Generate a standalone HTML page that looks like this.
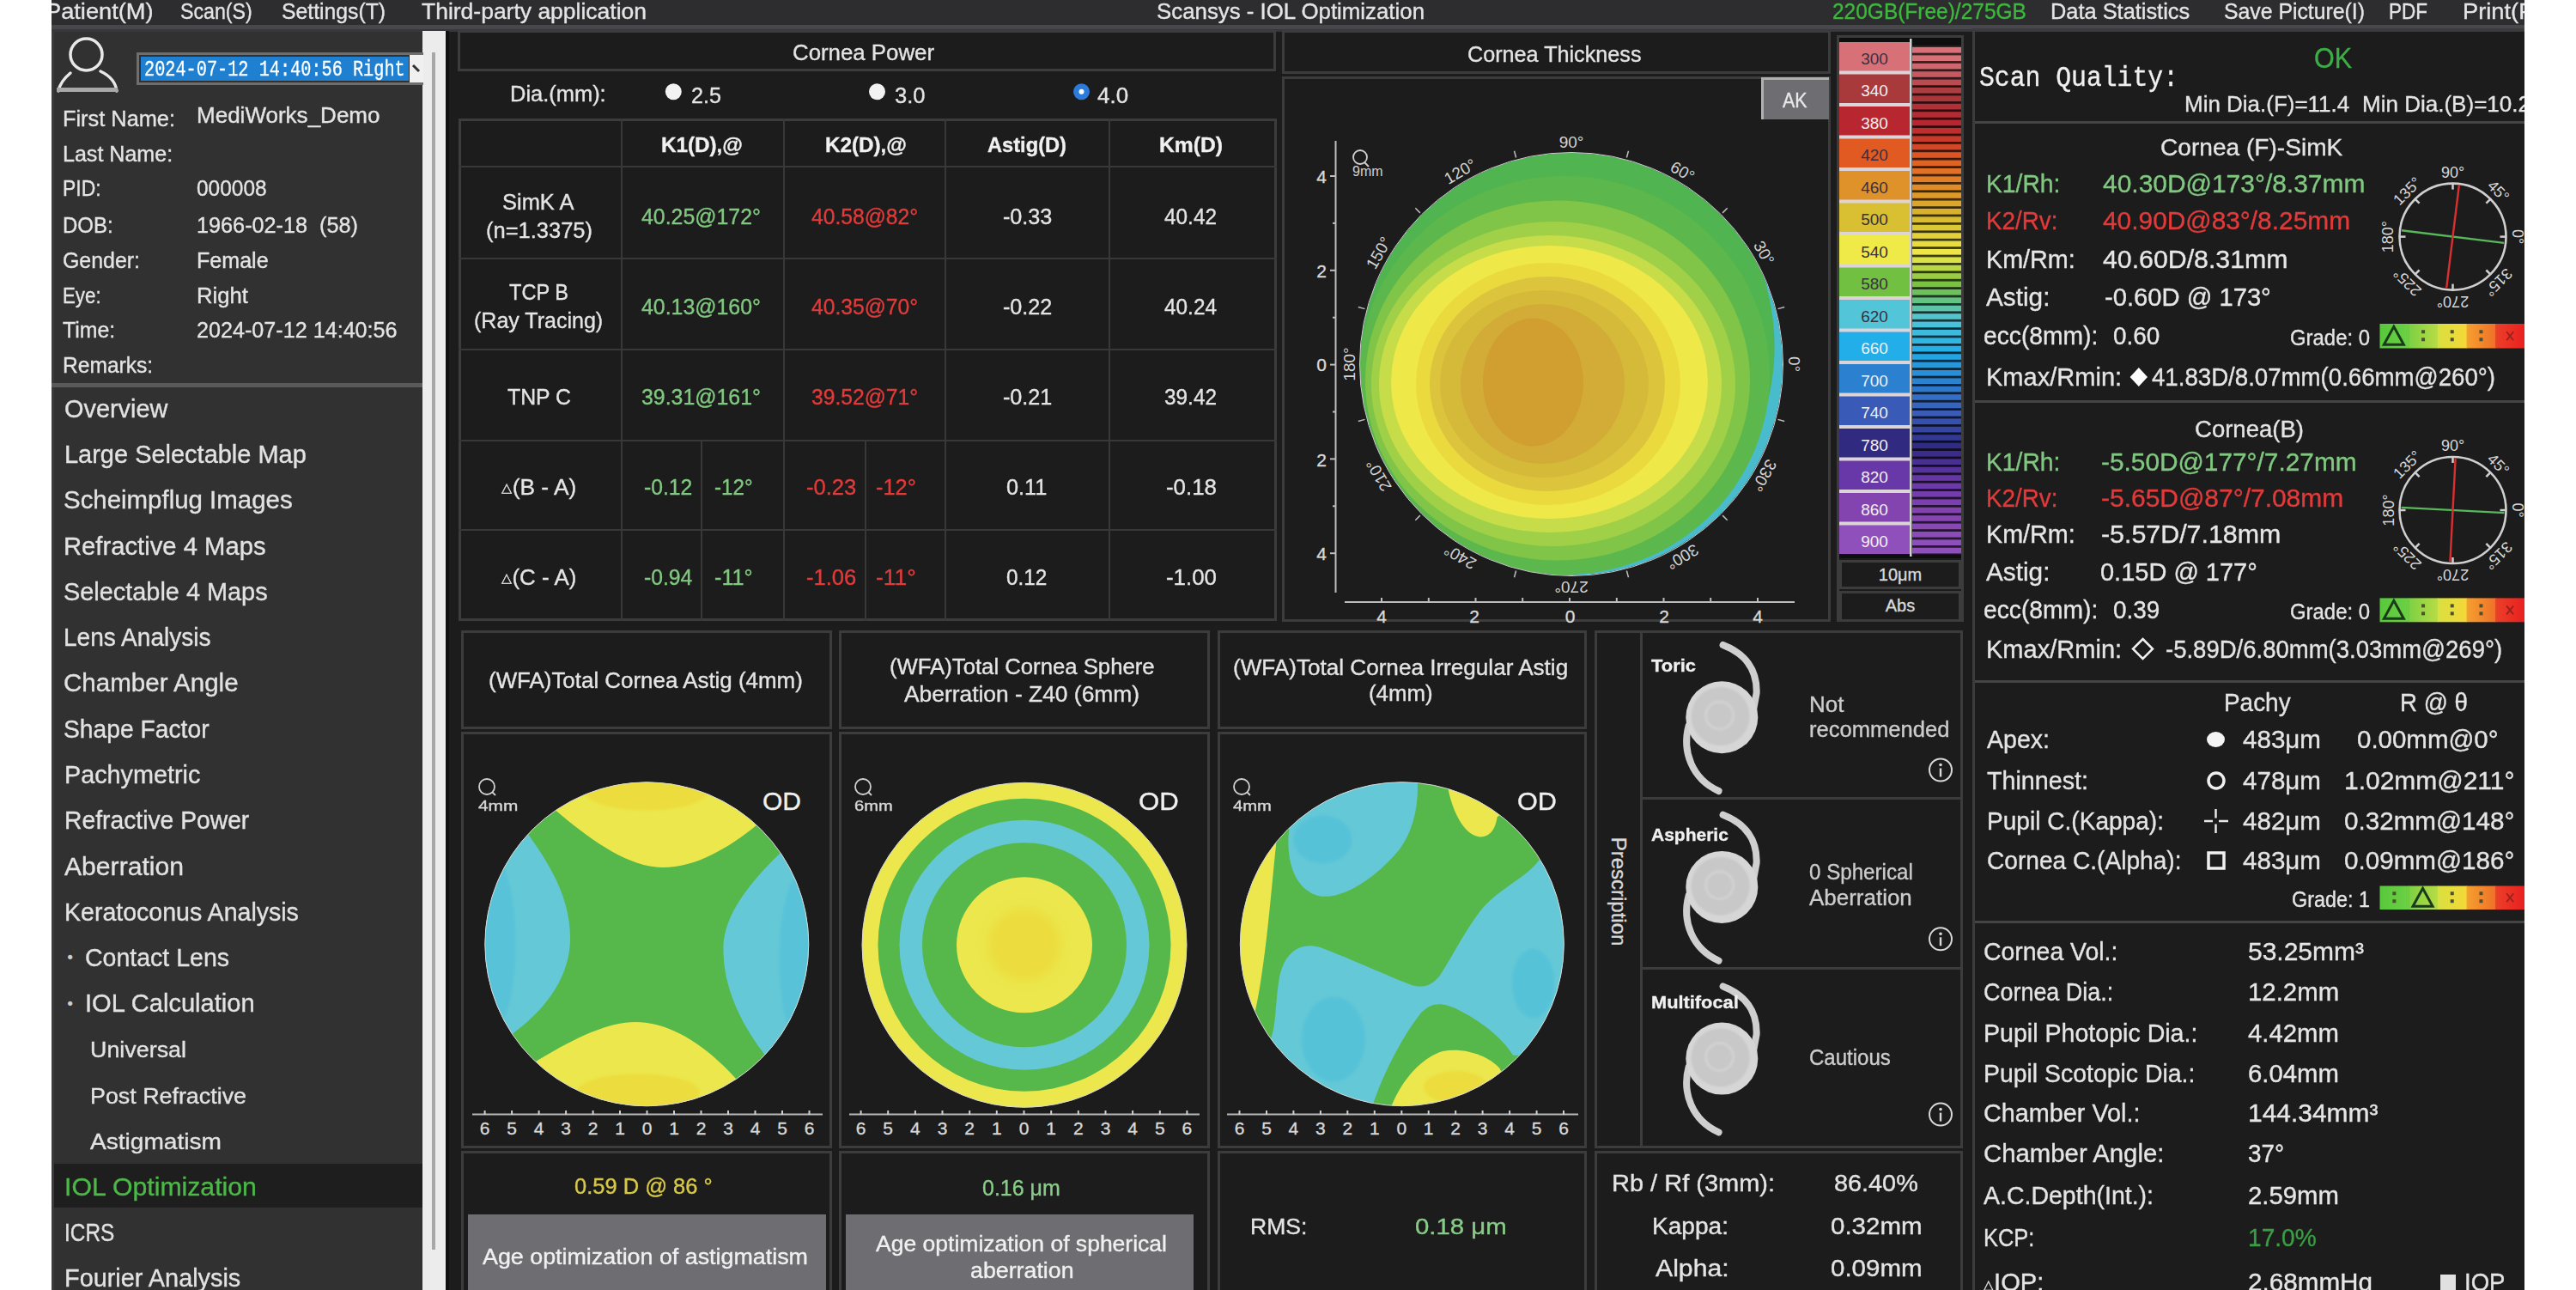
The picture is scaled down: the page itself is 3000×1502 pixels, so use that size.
<!DOCTYPE html>
<html><head><meta charset="utf-8"><style>
html,body{margin:0;padding:0;background:#fff;width:3000px;height:1502px;overflow:hidden;position:relative}
.a{position:absolute;box-sizing:border-box}
.t{position:absolute;white-space:nowrap;line-height:1;font-family:"Liberation Sans",sans-serif;-webkit-text-stroke:0.35px currentColor}
</style></head><body>
<div class="a" style="left:60px;top:0px;width:2880px;height:1502px;background:#1c1c1c;"></div>
<div class="a" style="left:60px;top:0px;width:2880px;height:29px;background:#2d2d30;"></div>
<div class="a" style="left:60px;top:29px;width:2880px;height:5px;background:#48484c;"></div>
<div class="a" style="left:60px;top:34px;width:2880px;height:3px;background:#38383a;"></div>
<div class="a" style="left:60px;top:37px;width:432px;height:1465px;background:#313131;"></div>
<div class="a" style="left:60px;top:37px;width:3px;height:1465px;background:#3a3a3a;"></div>
<div class="a" style="left:492px;top:36px;width:27px;height:1466px;background:#ececec;"></div>
<div class="a" style="left:503px;top:61px;width:4px;height:1394px;background:#a8a8a8;"></div>
<div class="a" style="left:519px;top:36px;width:4px;height:1466px;background:#101010;"></div>
<div class="a" style="left:60px;top:446px;width:432px;height:5px;background:#5a5a5a;"></div>
<div class="a" style="left:63px;top:1355px;width:429px;height:51px;background:#1e1e1e;"></div>
<svg class="a" style="left:60px;top:37px" width="100" height="80" viewBox="0 0 100 80">
<circle cx="40.5" cy="26.5" r="18.5" fill="none" stroke="#e8e8e8" stroke-width="3.5"/>
<path d="M22 48 Q 10 58 8 69" fill="none" stroke="#e8e8e8" stroke-width="3.5" stroke-linecap="round"/>
<path d="M57 46 Q 74 54 76 69" fill="none" stroke="#e8e8e8" stroke-width="3.5" stroke-linecap="round"/>
<rect x="6" y="65" width="71" height="5" fill="#a8a8a8"/>
</svg>
<div class="a" style="left:159px;top:61px;width:334px;height:38px;background:#6e6e6e;"></div>
<div class="a" style="left:162px;top:64px;width:316px;height:32px;background:#313131;"></div>
<div class="a" style="left:164px;top:66px;width:312px;height:28px;background:#1f7fd0;"></div>
<div class="a" style="left:477px;top:64px;width:16px;height:32px;background:#f0f0f0;"></div>
<div class="a" style="left:533px;top:35px;width:953px;height:48px;box-shadow:inset 0 0 0 3px #3c3c3c;"></div>
<div class="a" style="left:534px;top:138px;width:953px;height:585px;box-shadow:inset 0 0 0 3px #3c3c3c;"></div>
<div class="a" style="left:723px;top:138px;width:2px;height:585px;background:#383838;"></div>
<div class="a" style="left:912px;top:138px;width:2px;height:585px;background:#383838;"></div>
<div class="a" style="left:1100px;top:138px;width:2px;height:585px;background:#383838;"></div>
<div class="a" style="left:1291px;top:138px;width:2px;height:585px;background:#383838;"></div>
<div class="a" style="left:534px;top:193px;width:953px;height:2px;background:#383838;"></div>
<div class="a" style="left:534px;top:300px;width:953px;height:2px;background:#383838;"></div>
<div class="a" style="left:534px;top:406px;width:953px;height:2px;background:#383838;"></div>
<div class="a" style="left:534px;top:512px;width:953px;height:2px;background:#383838;"></div>
<div class="a" style="left:534px;top:616px;width:953px;height:2px;background:#383838;"></div>
<div class="a" style="left:816px;top:513px;width:2px;height:210px;background:#383838;"></div>
<div class="a" style="left:1007px;top:513px;width:2px;height:210px;background:#383838;"></div>
<div class="a" style="left:1493px;top:35px;width:639px;height:51px;box-shadow:inset 0 0 0 3px #3c3c3c;"></div>
<div class="a" style="left:1493px;top:89px;width:639px;height:635px;box-shadow:inset 0 0 0 3px #3c3c3c;"></div>
<div class="a" style="left:2051px;top:90px;width:79px;height:49px;background:#6e6e72;box-shadow:inset 3px 3px 0 #b0b0b0;"></div>
<div class="a" style="left:2139px;top:41px;width:148px;height:683px;box-shadow:inset 0 0 0 3px #3c3c3c;"></div>
<div class="a" style="left:2142px;top:44px;width:142px;height:606px;background:#0e0e0e;"></div>
<div class="a" style="left:2142px;top:652px;width:142px;height:34px;box-shadow:inset 0 0 0 3px #3c3c3c;"></div>
<div class="a" style="left:2142px;top:688px;width:142px;height:36px;box-shadow:inset 0 0 0 3px #3c3c3c;"></div>
<div class="a" style="left:2297px;top:33px;width:643px;height:3px;background:#3c3c3c;"></div>
<div class="a" style="left:2297px;top:33px;width:3px;height:1469px;background:#3c3c3c;"></div>
<div class="a" style="left:2300px;top:141px;width:640px;height:3px;background:#444444;"></div>
<div class="a" style="left:2300px;top:466px;width:640px;height:3px;background:#444444;"></div>
<div class="a" style="left:2300px;top:792px;width:640px;height:3px;background:#444444;"></div>
<div class="a" style="left:2300px;top:1072px;width:640px;height:3px;background:#444444;"></div>
<div class="a" style="left:537px;top:734px;width:432px;height:115px;box-shadow:inset 0 0 0 3px #3c3c3c;"></div>
<div class="a" style="left:537px;top:852px;width:432px;height:485px;box-shadow:inset 0 0 0 3px #3c3c3c;"></div>
<div class="a" style="left:537px;top:1340px;width:432px;height:170px;box-shadow:inset 0 0 0 3px #3c3c3c;"></div>
<div class="a" style="left:977px;top:734px;width:432px;height:115px;box-shadow:inset 0 0 0 3px #3c3c3c;"></div>
<div class="a" style="left:977px;top:852px;width:432px;height:485px;box-shadow:inset 0 0 0 3px #3c3c3c;"></div>
<div class="a" style="left:977px;top:1340px;width:432px;height:170px;box-shadow:inset 0 0 0 3px #3c3c3c;"></div>
<div class="a" style="left:1418px;top:734px;width:430px;height:115px;box-shadow:inset 0 0 0 3px #3c3c3c;"></div>
<div class="a" style="left:1418px;top:852px;width:430px;height:485px;box-shadow:inset 0 0 0 3px #3c3c3c;"></div>
<div class="a" style="left:1418px;top:1340px;width:430px;height:170px;box-shadow:inset 0 0 0 3px #3c3c3c;"></div>
<div class="a" style="left:1857px;top:734px;width:429px;height:603px;box-shadow:inset 0 0 0 3px #3c3c3c;"></div>
<div class="a" style="left:1910px;top:734px;width:3px;height:603px;background:#3c3c3c;"></div>
<div class="a" style="left:1912px;top:928px;width:374px;height:3px;background:#3c3c3c;"></div>
<div class="a" style="left:1912px;top:1126px;width:374px;height:3px;background:#3c3c3c;"></div>
<div class="a" style="left:1857px;top:1340px;width:429px;height:170px;box-shadow:inset 0 0 0 3px #3c3c3c;"></div>
<div class="a" style="left:545px;top:1414px;width:417px;height:88px;background:#6e6e72;"></div>
<div class="a" style="left:985px;top:1414px;width:405px;height:88px;background:#6e6e72;"></div>
<svg class="a" style="left:0;top:0" width="3000" height="1502" viewBox="0 0 3000 1502"><defs>
<clipPath id="c1"><circle cx="753.3" cy="1099.3" r="188.5"/></clipPath>
<clipPath id="c3"><circle cx="1632.8" cy="1099.2" r="188.5"/></clipPath>
<clipPath id="cth"><circle cx="1830" cy="424" r="246"/></clipPath>
<filter id="bl" x="-20%" y="-20%" width="140%" height="140%"><feGaussianBlur stdDeviation="1.2"/></filter>
<filter id="bl3" x="-20%" y="-20%" width="140%" height="140%"><feGaussianBlur stdDeviation="6"/></filter>
</defs>
<circle cx="784.3" cy="106.8" r="9.5" fill="#f2f2f2"/>
<circle cx="1021.5" cy="106.8" r="9.5" fill="#f2f2f2"/>
<circle cx="1259.5" cy="106.8" r="9.5" fill="#2b7bdc"/><circle cx="1259.5" cy="106.8" r="3" fill="#fff"/>
<path d="M481 76 L488 83" stroke="#333" stroke-width="3"/>
<g clip-path="url(#cth)">
<circle cx="1830" cy="424" r="246" fill="#48bccc"/>
<polygon points="2065.8,424.0 2065.4,428.1 2065.0,432.2 2064.5,436.3 2064.0,440.4 2063.4,444.4 2062.7,448.5 2062.0,452.5 2061.2,456.5 2060.4,460.5 2059.5,464.5 2058.5,468.4 2057.5,472.3 2056.4,476.3 2055.2,480.2 2054.0,484.0 2052.8,487.9 2051.4,491.7 2050.1,495.5 2048.6,499.3 2047.2,503.0 2045.6,506.8 2044.0,510.5 2042.4,514.1 2040.7,517.8 2038.9,521.4 2037.1,525.0 2035.2,528.6 2033.3,532.1 2031.3,535.6 2029.3,539.1 2027.2,542.5 2025.1,545.9 2022.9,549.3 2020.7,552.6 2018.4,555.9 2016.1,559.2 2013.7,562.4 2011.3,565.6 2008.8,568.8 2006.3,571.9 2003.7,575.0 2001.1,578.1 1998.4,581.1 1995.7,584.0 1993.0,587.0 1990.2,589.9 1987.3,592.7 1984.4,595.5 1981.5,598.3 1978.5,601.0 1975.5,603.7 1972.5,606.3 1969.4,608.9 1966.2,611.5 1963.0,614.0 1959.8,616.4 1956.5,618.8 1953.2,621.2 1949.9,623.5 1946.5,625.8 1943.1,628.0 1939.6,630.2 1936.1,632.3 1932.6,634.3 1929.0,636.3 1925.4,638.3 1921.8,640.2 1918.1,642.0 1914.4,643.8 1910.6,645.6 1906.9,647.2 1903.1,648.9 1899.2,650.4 1895.4,651.9 1891.5,653.4 1887.5,654.8 1883.6,656.1 1879.6,657.4 1875.6,658.6 1871.6,659.7 1867.5,660.8 1863.4,661.8 1859.3,662.8 1855.2,663.7 1851.0,664.5 1846.9,665.3 1842.7,666.0 1838.5,666.6 1834.2,667.2 1830.0,667.6 1825.7,668.1 1821.5,668.4 1817.2,668.7 1812.9,668.9 1808.6,669.1 1804.3,668.7 1800.0,668.2 1795.8,667.6 1791.5,667.0 1787.3,666.3 1783.1,665.5 1778.9,664.6 1774.7,663.7 1770.5,662.7 1766.3,661.6 1762.2,660.5 1758.1,659.3 1754.0,658.0 1749.9,656.6 1745.9,655.2 1741.8,653.7 1737.8,652.1 1733.9,650.4 1729.9,648.7 1726.0,647.0 1722.2,645.1 1718.3,643.2 1714.5,641.2 1710.7,639.2 1707.0,637.0 1703.3,634.9 1699.6,632.6 1696.0,630.3 1692.4,627.9 1688.9,625.5 1685.4,623.0 1682.0,620.5 1678.5,617.9 1675.2,615.2 1671.9,612.4 1668.6,609.7 1665.4,606.8 1662.2,603.9 1659.1,601.0 1656.1,597.9 1653.0,594.9 1650.1,591.8 1647.2,588.6 1644.3,585.4 1641.6,582.1 1638.8,578.8 1636.1,575.5 1633.5,572.0 1631.0,568.6 1628.5,565.1 1626.1,561.6 1623.7,558.0 1621.4,554.4 1619.1,550.7 1617.0,547.0 1614.8,543.3 1612.8,539.5 1610.8,535.7 1608.9,531.8 1607.0,528.0 1605.3,524.1 1603.6,520.1 1601.9,516.2 1600.3,512.2 1598.8,508.1 1597.4,504.1 1596.0,500.0 1594.7,495.9 1593.5,491.8 1592.4,487.7 1591.3,483.5 1590.3,479.3 1589.4,475.1 1588.5,470.9 1587.7,466.7 1587.0,462.5 1586.4,458.2 1585.8,454.0 1585.3,449.7 1584.9,445.4 1584.6,441.2 1584.3,436.9 1584.1,432.6 1584.0,428.3 1584.0,424.0 1584.0,419.7 1584.1,415.4 1584.3,411.1 1584.6,406.8 1584.9,402.6 1585.3,398.3 1585.8,394.0 1586.4,389.8 1587.0,385.5 1587.7,381.3 1588.5,377.1 1589.4,372.9 1590.3,368.7 1591.3,364.5 1592.4,360.3 1593.5,356.2 1594.7,352.1 1596.0,348.0 1597.4,343.9 1598.8,339.9 1600.3,335.8 1601.9,331.8 1603.6,327.9 1605.3,323.9 1607.0,320.0 1608.9,316.2 1610.8,312.3 1612.8,308.5 1614.8,304.7 1617.0,301.0 1619.1,297.3 1621.4,293.6 1623.7,290.0 1626.1,286.4 1628.5,282.9 1631.0,279.4 1633.5,276.0 1636.1,272.5 1638.8,269.2 1641.6,265.9 1644.3,262.6 1647.2,259.4 1650.1,256.2 1653.0,253.1 1656.1,250.1 1659.1,247.0 1662.2,244.1 1665.4,241.2 1668.6,238.3 1671.9,235.6 1675.2,232.8 1678.5,230.1 1682.0,227.5 1685.4,225.0 1688.9,222.5 1692.4,220.1 1696.0,217.7 1699.6,215.4 1703.3,213.1 1707.0,211.0 1710.7,208.8 1714.5,206.8 1718.3,204.8 1722.2,202.9 1726.0,201.0 1729.9,199.3 1733.9,197.6 1737.8,195.9 1741.8,194.3 1745.9,192.8 1749.9,191.4 1754.0,190.0 1758.1,188.7 1762.2,187.5 1766.3,186.4 1770.5,185.3 1774.7,184.3 1778.9,183.4 1783.1,182.5 1787.3,181.7 1791.5,181.0 1795.8,180.4 1800.0,179.8 1804.3,179.3 1808.6,178.9 1812.8,178.6 1817.1,178.3 1821.4,178.1 1825.7,178.0 1830.0,178.0 1834.3,178.0 1838.6,178.1 1842.9,178.3 1847.2,178.6 1851.4,178.9 1855.7,179.3 1860.0,179.8 1864.2,180.4 1868.5,181.0 1872.7,181.7 1876.9,182.5 1881.1,183.4 1885.3,184.3 1889.5,185.3 1893.7,186.4 1897.8,187.5 1901.9,188.7 1906.0,190.0 1910.1,191.4 1914.1,192.8 1918.2,194.3 1922.2,195.9 1926.1,197.6 1930.1,199.3 1934.0,201.0 1937.8,202.9 1941.7,204.8 1945.5,206.8 1949.3,208.8 1953.0,211.0 1956.7,213.1 1960.4,215.4 1964.0,217.7 1967.6,220.1 1971.1,222.5 1974.6,225.0 1978.0,227.5 1981.5,230.1 1984.8,232.8 1988.1,235.6 1991.4,238.3 1994.6,241.2 1997.8,244.1 2000.9,247.0 2003.9,250.1 2007.0,253.1 2009.9,256.2 2012.8,259.4 2015.7,262.6 2018.4,265.9 2021.2,269.2 2023.9,272.5 2026.5,276.0 2029.0,279.4 2031.5,282.9 2033.9,286.4 2036.3,290.0 2038.6,293.6 2040.9,297.3 2043.0,301.0 2045.2,304.7 2047.2,308.5 2049.2,312.3 2051.1,316.2 2053.0,320.0 2054.3,324.1 2055.6,328.3 2056.8,332.4 2057.9,336.5 2059.0,340.7 2059.9,344.8 2060.9,349.0 2061.7,353.2 2062.5,357.3 2063.2,361.5 2063.8,365.7 2064.4,369.9 2064.9,374.1 2065.4,378.2 2065.7,382.4 2066.0,386.6 2066.3,390.8 2066.4,395.0 2066.5,399.1 2066.6,403.3 2066.6,407.5 2066.5,411.6 2066.3,415.7 2066.1,419.9" fill="#50b450"/>
<ellipse cx="1822" cy="437" rx="239" ry="232" fill="#5cb84c"/>
<ellipse cx="1814" cy="443" rx="224" ry="209.6" fill="#80c448"/>
<ellipse cx="1809" cy="447" rx="212" ry="189" fill="#a0d048"/>
<ellipse cx="1805.5" cy="447" rx="199.5" ry="173" fill="#c6dc48"/>
<ellipse cx="1804.5" cy="445" rx="184.5" ry="159" fill="#eee948"/>
<ellipse cx="1803" cy="447" rx="154" ry="141" fill="#ebda3e"/>
<ellipse cx="1802" cy="447" rx="137" ry="125" fill="#dcc43c"/>
<ellipse cx="1798.5" cy="447" rx="121.5" ry="109" fill="#d5ba3a"/>
<ellipse cx="1796.5" cy="447" rx="95.5" ry="93" fill="#d2ac36"/>
<ellipse cx="1785.5" cy="445" rx="58.5" ry="74.5" fill="#d19e30"/>
</g>
<circle cx="1830" cy="424" r="246.5" fill="none" stroke="#cfcfcf" stroke-width="1"/>
<line x1="2070.5" y1="359.6" x2="2078.2" y2="357.5" stroke="#bdbdbd" stroke-width="1.5"/>
<line x1="2006.1" y1="247.9" x2="2011.7" y2="242.3" stroke="#bdbdbd" stroke-width="1.5"/>
<line x1="1894.4" y1="183.5" x2="1896.5" y2="175.8" stroke="#bdbdbd" stroke-width="1.5"/>
<line x1="1765.6" y1="183.5" x2="1763.5" y2="175.8" stroke="#bdbdbd" stroke-width="1.5"/>
<line x1="1653.9" y1="247.9" x2="1648.3" y2="242.3" stroke="#bdbdbd" stroke-width="1.5"/>
<line x1="1589.5" y1="359.6" x2="1581.8" y2="357.5" stroke="#bdbdbd" stroke-width="1.5"/>
<line x1="1589.5" y1="488.4" x2="1581.8" y2="490.5" stroke="#bdbdbd" stroke-width="1.5"/>
<line x1="1653.9" y1="600.1" x2="1648.3" y2="605.7" stroke="#bdbdbd" stroke-width="1.5"/>
<line x1="1765.6" y1="664.5" x2="1763.5" y2="672.2" stroke="#bdbdbd" stroke-width="1.5"/>
<line x1="1894.4" y1="664.5" x2="1896.5" y2="672.2" stroke="#bdbdbd" stroke-width="1.5"/>
<line x1="2006.1" y1="600.1" x2="2011.7" y2="605.7" stroke="#bdbdbd" stroke-width="1.5"/>
<line x1="2070.5" y1="488.4" x2="2078.2" y2="490.5" stroke="#bdbdbd" stroke-width="1.5"/>
<text x="2089.0" y="424.0" transform="rotate(90 2089.0 424.0)" font-family="Liberation Sans" font-size="19" fill="#d4d4d4" text-anchor="middle" dominant-baseline="central">0°</text>
<text x="2054.3" y="294.5" transform="rotate(60 2054.3 294.5)" font-family="Liberation Sans" font-size="19" fill="#d4d4d4" text-anchor="middle" dominant-baseline="central">30°</text>
<text x="1959.5" y="199.7" transform="rotate(30 1959.5 199.7)" font-family="Liberation Sans" font-size="19" fill="#d4d4d4" text-anchor="middle" dominant-baseline="central">60°</text>
<text x="1830.0" y="165.0" transform="rotate(0 1830.0 165.0)" font-family="Liberation Sans" font-size="19" fill="#d4d4d4" text-anchor="middle" dominant-baseline="central">90°</text>
<text x="1700.5" y="199.7" transform="rotate(-30 1700.5 199.7)" font-family="Liberation Sans" font-size="19" fill="#d4d4d4" text-anchor="middle" dominant-baseline="central">120°</text>
<text x="1605.7" y="294.5" transform="rotate(-60 1605.7 294.5)" font-family="Liberation Sans" font-size="19" fill="#d4d4d4" text-anchor="middle" dominant-baseline="central">150°</text>
<text x="1571.0" y="424.0" transform="rotate(-90 1571.0 424.0)" font-family="Liberation Sans" font-size="19" fill="#d4d4d4" text-anchor="middle" dominant-baseline="central">180°</text>
<text x="1605.7" y="553.5" transform="rotate(-120 1605.7 553.5)" font-family="Liberation Sans" font-size="19" fill="#d4d4d4" text-anchor="middle" dominant-baseline="central">210°</text>
<text x="1700.5" y="648.3" transform="rotate(-150 1700.5 648.3)" font-family="Liberation Sans" font-size="19" fill="#d4d4d4" text-anchor="middle" dominant-baseline="central">240°</text>
<text x="1830.0" y="683.0" transform="rotate(-180 1830.0 683.0)" font-family="Liberation Sans" font-size="19" fill="#d4d4d4" text-anchor="middle" dominant-baseline="central">270°</text>
<text x="1959.5" y="648.3" transform="rotate(-210 1959.5 648.3)" font-family="Liberation Sans" font-size="19" fill="#d4d4d4" text-anchor="middle" dominant-baseline="central">300°</text>
<text x="2054.3" y="553.5" transform="rotate(-240 2054.3 553.5)" font-family="Liberation Sans" font-size="19" fill="#d4d4d4" text-anchor="middle" dominant-baseline="central">330°</text>
<line x1="1555.5" y1="164" x2="1555.5" y2="690" stroke="#bdbdbd" stroke-width="2"/>
<line x1="1549" y1="205.0" x2="1556" y2="205.0" stroke="#bdbdbd" stroke-width="2"/>
<line x1="1552" y1="259.9" x2="1556" y2="259.9" stroke="#bdbdbd" stroke-width="2"/>
<line x1="1549" y1="314.8" x2="1556" y2="314.8" stroke="#bdbdbd" stroke-width="2"/>
<line x1="1552" y1="369.7" x2="1556" y2="369.7" stroke="#bdbdbd" stroke-width="2"/>
<line x1="1549" y1="424.6" x2="1556" y2="424.6" stroke="#bdbdbd" stroke-width="2"/>
<line x1="1552" y1="479.5" x2="1556" y2="479.5" stroke="#bdbdbd" stroke-width="2"/>
<line x1="1549" y1="534.4" x2="1556" y2="534.4" stroke="#bdbdbd" stroke-width="2"/>
<line x1="1552" y1="589.3" x2="1556" y2="589.3" stroke="#bdbdbd" stroke-width="2"/>
<line x1="1549" y1="644.2" x2="1556" y2="644.2" stroke="#bdbdbd" stroke-width="2"/>
<line x1="1566" y1="701" x2="2090" y2="701" stroke="#bdbdbd" stroke-width="2"/>
<line x1="1609.0" y1="696" x2="1609.0" y2="701" stroke="#bdbdbd" stroke-width="2"/>
<line x1="1663.8" y1="696" x2="1663.8" y2="701" stroke="#bdbdbd" stroke-width="2"/>
<line x1="1718.5" y1="696" x2="1718.5" y2="701" stroke="#bdbdbd" stroke-width="2"/>
<line x1="1773.2" y1="696" x2="1773.2" y2="701" stroke="#bdbdbd" stroke-width="2"/>
<line x1="1828.0" y1="696" x2="1828.0" y2="701" stroke="#bdbdbd" stroke-width="2"/>
<line x1="1882.8" y1="696" x2="1882.8" y2="701" stroke="#bdbdbd" stroke-width="2"/>
<line x1="1937.5" y1="696" x2="1937.5" y2="701" stroke="#bdbdbd" stroke-width="2"/>
<line x1="1992.2" y1="696" x2="1992.2" y2="701" stroke="#bdbdbd" stroke-width="2"/>
<line x1="2047.0" y1="696" x2="2047.0" y2="701" stroke="#bdbdbd" stroke-width="2"/>
<circle cx="1584" cy="183" r="8" fill="none" stroke="#d0d0d0" stroke-width="1.8"/><line x1="1589" y1="189" x2="1594" y2="194" stroke="#d0d0d0" stroke-width="1.8"/>
<text x="1575" y="205" font-family="Liberation Sans" font-size="16" fill="#d0d0d0">9mm</text>
<rect x="2142" y="49" width="82" height="595" fill="#ddd4d8"/>
<rect x="2142" y="49.0" width="82" height="33.5" fill="#d87078"/>
<rect x="2142" y="86.5" width="82" height="33.5" fill="#a83a3c"/>
<rect x="2142" y="124.0" width="82" height="33.5" fill="#b82630"/>
<rect x="2142" y="161.5" width="82" height="33.5" fill="#e05a22"/>
<rect x="2142" y="199.0" width="82" height="33.5" fill="#e0922a"/>
<rect x="2142" y="236.5" width="82" height="33.5" fill="#d8c032"/>
<rect x="2142" y="274.0" width="82" height="33.5" fill="#f0ea48"/>
<rect x="2142" y="311.5" width="82" height="33.5" fill="#72c042"/>
<rect x="2142" y="349.0" width="82" height="33.5" fill="#52c6d8"/>
<rect x="2142" y="386.5" width="82" height="33.5" fill="#22aee8"/>
<rect x="2142" y="424.0" width="82" height="33.5" fill="#2c80d0"/>
<rect x="2142" y="461.5" width="82" height="33.5" fill="#3a5ab8"/>
<rect x="2142" y="499.0" width="82" height="33.5" fill="#302a80"/>
<rect x="2142" y="536.5" width="82" height="33.5" fill="#6838a8"/>
<rect x="2142" y="574.0" width="82" height="33.5" fill="#8444b0"/>
<rect x="2142" y="611.5" width="82" height="33.5" fill="#9050bc"/>
<rect x="2224" y="45" width="2.5" height="603" fill="#e8e8e8" opacity="0.9"/>
<rect x="2227" y="53.3" width="57" height="9.4" fill="rgb(64, 33, 36)"/>
<rect x="2227" y="55.0" width="57" height="6.6" fill="rgb(216, 112, 120)"/>
<rect x="2227" y="62.7" width="57" height="9.4" fill="rgb(64, 33, 36)"/>
<rect x="2227" y="64.4" width="57" height="6.6" fill="rgb(216, 112, 120)"/>
<rect x="2227" y="72.1" width="57" height="9.4" fill="rgb(62, 30, 33)"/>
<rect x="2227" y="73.8" width="57" height="6.6" fill="rgb(208, 103, 110)"/>
<rect x="2227" y="81.5" width="57" height="9.4" fill="rgb(58, 26, 28)"/>
<rect x="2227" y="83.2" width="57" height="6.6" fill="rgb(196, 89, 95)"/>
<rect x="2227" y="90.9" width="57" height="9.4" fill="rgb(55, 22, 24)"/>
<rect x="2227" y="92.6" width="57" height="6.6" fill="rgb(184, 76, 80)"/>
<rect x="2227" y="100.3" width="57" height="9.4" fill="rgb(51, 18, 19)"/>
<rect x="2227" y="102.0" width="57" height="6.6" fill="rgb(172, 62, 65)"/>
<rect x="2227" y="109.7" width="57" height="9.4" fill="rgb(51, 16, 17)"/>
<rect x="2227" y="111.4" width="57" height="6.6" fill="rgb(170, 54, 58)"/>
<rect x="2227" y="119.1" width="57" height="9.4" fill="rgb(52, 14, 16)"/>
<rect x="2227" y="120.8" width="57" height="6.6" fill="rgb(174, 49, 55)"/>
<rect x="2227" y="128.5" width="57" height="9.4" fill="rgb(53, 13, 15)"/>
<rect x="2227" y="130.2" width="57" height="6.6" fill="rgb(178, 44, 52)"/>
<rect x="2227" y="137.9" width="57" height="9.4" fill="rgb(54, 11, 14)"/>
<rect x="2227" y="139.6" width="57" height="6.6" fill="rgb(182, 39, 49)"/>
<rect x="2227" y="147.3" width="57" height="9.4" fill="rgb(57, 13, 13)"/>
<rect x="2227" y="149.0" width="57" height="6.6" fill="rgb(190, 46, 45)"/>
<rect x="2227" y="156.7" width="57" height="9.4" fill="rgb(60, 17, 12)"/>
<rect x="2227" y="158.4" width="57" height="6.6" fill="rgb(200, 59, 42)"/>
<rect x="2227" y="166.1" width="57" height="9.4" fill="rgb(63, 21, 11)"/>
<rect x="2227" y="167.8" width="57" height="6.6" fill="rgb(210, 72, 38)"/>
<rect x="2227" y="175.5" width="57" height="9.4" fill="rgb(66, 25, 10)"/>
<rect x="2227" y="177.2" width="57" height="6.6" fill="rgb(220, 85, 35)"/>
<rect x="2227" y="184.9" width="57" height="9.4" fill="rgb(67, 29, 10)"/>
<rect x="2227" y="186.6" width="57" height="6.6" fill="rgb(224, 99, 35)"/>
<rect x="2227" y="194.3" width="57" height="9.4" fill="rgb(67, 33, 11)"/>
<rect x="2227" y="196.0" width="57" height="6.6" fill="rgb(224, 113, 37)"/>
<rect x="2227" y="203.7" width="57" height="9.4" fill="rgb(67, 38, 11)"/>
<rect x="2227" y="205.4" width="57" height="6.6" fill="rgb(224, 127, 39)"/>
<rect x="2227" y="213.1" width="57" height="9.4" fill="rgb(67, 42, 12)"/>
<rect x="2227" y="214.8" width="57" height="6.6" fill="rgb(224, 141, 41)"/>
<rect x="2227" y="222.5" width="57" height="9.4" fill="rgb(66, 45, 12)"/>
<rect x="2227" y="224.2" width="57" height="6.6" fill="rgb(222, 153, 43)"/>
<rect x="2227" y="231.9" width="57" height="9.4" fill="rgb(66, 49, 13)"/>
<rect x="2227" y="233.6" width="57" height="6.6" fill="rgb(220, 165, 45)"/>
<rect x="2227" y="241.3" width="57" height="9.4" fill="rgb(65, 52, 14)"/>
<rect x="2227" y="243.0" width="57" height="6.6" fill="rgb(218, 176, 47)"/>
<rect x="2227" y="250.7" width="57" height="9.4" fill="rgb(64, 56, 14)"/>
<rect x="2227" y="252.4" width="57" height="6.6" fill="rgb(216, 188, 49)"/>
<rect x="2227" y="260.1" width="57" height="9.4" fill="rgb(66, 59, 15)"/>
<rect x="2227" y="261.8" width="57" height="6.6" fill="rgb(220, 199, 53)"/>
<rect x="2227" y="269.5" width="57" height="9.4" fill="rgb(67, 62, 17)"/>
<rect x="2227" y="271.2" width="57" height="6.6" fill="rgb(226, 209, 59)"/>
<rect x="2227" y="278.9" width="57" height="9.4" fill="rgb(69, 66, 19)"/>
<rect x="2227" y="280.6" width="57" height="6.6" fill="rgb(232, 220, 64)"/>
<rect x="2227" y="288.3" width="57" height="9.4" fill="rgb(71, 69, 21)"/>
<rect x="2227" y="290.0" width="57" height="6.6" fill="rgb(238, 230, 70)"/>
<rect x="2227" y="297.7" width="57" height="9.4" fill="rgb(65, 67, 21)"/>
<rect x="2227" y="299.4" width="57" height="6.6" fill="rgb(217, 226, 70)"/>
<rect x="2227" y="307.1" width="57" height="9.4" fill="rgb(55, 64, 20)"/>
<rect x="2227" y="308.8" width="57" height="6.6" fill="rgb(186, 216, 69)"/>
<rect x="2227" y="316.5" width="57" height="9.4" fill="rgb(46, 61, 20)"/>
<rect x="2227" y="318.2" width="57" height="6.6" fill="rgb(154, 205, 67)"/>
<rect x="2227" y="325.9" width="57" height="9.4" fill="rgb(36, 58, 19)"/>
<rect x="2227" y="327.6" width="57" height="6.6" fill="rgb(122, 194, 66)"/>
<rect x="2227" y="335.3" width="57" height="9.4" fill="rgb(32, 57, 27)"/>
<rect x="2227" y="337.0" width="57" height="6.6" fill="rgb(108, 193, 92)"/>
<rect x="2227" y="344.7" width="57" height="9.4" fill="rgb(30, 58, 39)"/>
<rect x="2227" y="346.4" width="57" height="6.6" fill="rgb(100, 194, 130)"/>
<rect x="2227" y="354.1" width="57" height="9.4" fill="rgb(27, 58, 50)"/>
<rect x="2227" y="355.8" width="57" height="6.6" fill="rgb(92, 196, 168)"/>
<rect x="2227" y="363.5" width="57" height="9.4" fill="rgb(25, 59, 61)"/>
<rect x="2227" y="365.2" width="57" height="6.6" fill="rgb(84, 197, 205)"/>
<rect x="2227" y="372.9" width="57" height="9.4" fill="rgb(21, 57, 65)"/>
<rect x="2227" y="374.6" width="57" height="6.6" fill="rgb(73, 193, 218)"/>
<rect x="2227" y="382.3" width="57" height="9.4" fill="rgb(18, 56, 66)"/>
<rect x="2227" y="384.0" width="57" height="6.6" fill="rgb(61, 187, 222)"/>
<rect x="2227" y="391.7" width="57" height="9.4" fill="rgb(14, 54, 67)"/>
<rect x="2227" y="393.4" width="57" height="6.6" fill="rgb(49, 181, 226)"/>
<rect x="2227" y="401.1" width="57" height="9.4" fill="rgb(11, 52, 69)"/>
<rect x="2227" y="402.8" width="57" height="6.6" fill="rgb(37, 175, 230)"/>
<rect x="2227" y="410.5" width="57" height="9.4" fill="rgb(10, 49, 68)"/>
<rect x="2227" y="412.2" width="57" height="6.6" fill="rgb(35, 165, 227)"/>
<rect x="2227" y="419.9" width="57" height="9.4" fill="rgb(11, 45, 66)"/>
<rect x="2227" y="421.6" width="57" height="6.6" fill="rgb(38, 153, 221)"/>
<rect x="2227" y="429.3" width="57" height="9.4" fill="rgb(12, 42, 64)"/>
<rect x="2227" y="431.0" width="57" height="6.6" fill="rgb(40, 142, 215)"/>
<rect x="2227" y="438.7" width="57" height="9.4" fill="rgb(12, 39, 62)"/>
<rect x="2227" y="440.4" width="57" height="6.6" fill="rgb(43, 130, 209)"/>
<rect x="2227" y="448.1" width="57" height="9.4" fill="rgb(13, 36, 60)"/>
<rect x="2227" y="449.8" width="57" height="6.6" fill="rgb(46, 120, 203)"/>
<rect x="2227" y="457.5" width="57" height="9.4" fill="rgb(15, 33, 59)"/>
<rect x="2227" y="459.2" width="57" height="6.6" fill="rgb(50, 111, 197)"/>
<rect x="2227" y="466.9" width="57" height="9.4" fill="rgb(15, 30, 57)"/>
<rect x="2227" y="468.6" width="57" height="6.6" fill="rgb(53, 101, 191)"/>
<rect x="2227" y="476.3" width="57" height="9.4" fill="rgb(17, 27, 55)"/>
<rect x="2227" y="478.0" width="57" height="6.6" fill="rgb(57, 92, 185)"/>
<rect x="2227" y="485.7" width="57" height="9.4" fill="rgb(16, 24, 51)"/>
<rect x="2227" y="487.4" width="57" height="6.6" fill="rgb(56, 80, 173)"/>
<rect x="2227" y="495.1" width="57" height="9.4" fill="rgb(15, 20, 47)"/>
<rect x="2227" y="496.8" width="57" height="6.6" fill="rgb(53, 68, 159)"/>
<rect x="2227" y="504.5" width="57" height="9.4" fill="rgb(15, 16, 43)"/>
<rect x="2227" y="506.2" width="57" height="6.6" fill="rgb(51, 56, 145)"/>
<rect x="2227" y="513.9" width="57" height="9.4" fill="rgb(14, 13, 39)"/>
<rect x="2227" y="515.6" width="57" height="6.6" fill="rgb(48, 44, 131)"/>
<rect x="2227" y="523.3" width="57" height="9.4" fill="rgb(17, 13, 40)"/>
<rect x="2227" y="525.0" width="57" height="6.6" fill="rgb(58, 44, 135)"/>
<rect x="2227" y="532.7" width="57" height="9.4" fill="rgb(21, 14, 43)"/>
<rect x="2227" y="534.4" width="57" height="6.6" fill="rgb(72, 48, 145)"/>
<rect x="2227" y="542.1" width="57" height="9.4" fill="rgb(25, 15, 46)"/>
<rect x="2227" y="543.8" width="57" height="6.6" fill="rgb(86, 51, 155)"/>
<rect x="2227" y="551.5" width="57" height="9.4" fill="rgb(30, 16, 49)"/>
<rect x="2227" y="553.2" width="57" height="6.6" fill="rgb(100, 55, 165)"/>
<rect x="2227" y="560.9" width="57" height="9.4" fill="rgb(32, 17, 50)"/>
<rect x="2227" y="562.6" width="57" height="6.6" fill="rgb(109, 58, 169)"/>
<rect x="2227" y="570.3" width="57" height="9.4" fill="rgb(34, 18, 51)"/>
<rect x="2227" y="572.0" width="57" height="6.6" fill="rgb(116, 61, 171)"/>
<rect x="2227" y="579.7" width="57" height="9.4" fill="rgb(36, 19, 51)"/>
<rect x="2227" y="581.4" width="57" height="6.6" fill="rgb(123, 64, 173)"/>
<rect x="2227" y="589.1" width="57" height="9.4" fill="rgb(39, 20, 52)"/>
<rect x="2227" y="590.8" width="57" height="6.6" fill="rgb(130, 67, 175)"/>
<rect x="2227" y="598.5" width="57" height="9.4" fill="rgb(40, 21, 53)"/>
<rect x="2227" y="600.2" width="57" height="6.6" fill="rgb(134, 70, 178)"/>
<rect x="2227" y="607.9" width="57" height="9.4" fill="rgb(41, 21, 54)"/>
<rect x="2227" y="609.6" width="57" height="6.6" fill="rgb(137, 73, 181)"/>
<rect x="2227" y="617.3" width="57" height="9.4" fill="rgb(42, 22, 55)"/>
<rect x="2227" y="619.0" width="57" height="6.6" fill="rgb(140, 76, 184)"/>
<rect x="2227" y="626.7" width="57" height="9.4" fill="rgb(42, 23, 56)"/>
<rect x="2227" y="628.4" width="57" height="6.6" fill="rgb(143, 79, 187)"/>
<rect x="2227" y="636.1" width="57" height="9.4" fill="rgb(43, 24, 56)"/>
<rect x="2227" y="637.8" width="57" height="6.6" fill="rgb(144, 80, 188)"/>
<text x="2183" y="68.0" font-family="Liberation Sans" font-size="19" fill="#3a3040" text-anchor="middle" dominant-baseline="central">300</text>
<text x="2183" y="105.5" font-family="Liberation Sans" font-size="19" fill="#f0f0f0" text-anchor="middle" dominant-baseline="central">340</text>
<text x="2183" y="143.0" font-family="Liberation Sans" font-size="19" fill="#f0f0f0" text-anchor="middle" dominant-baseline="central">380</text>
<text x="2183" y="180.5" font-family="Liberation Sans" font-size="19" fill="#3a3040" text-anchor="middle" dominant-baseline="central">420</text>
<text x="2183" y="218.0" font-family="Liberation Sans" font-size="19" fill="#3a3040" text-anchor="middle" dominant-baseline="central">460</text>
<text x="2183" y="255.5" font-family="Liberation Sans" font-size="19" fill="#3a3040" text-anchor="middle" dominant-baseline="central">500</text>
<text x="2183" y="293.0" font-family="Liberation Sans" font-size="19" fill="#3a3040" text-anchor="middle" dominant-baseline="central">540</text>
<text x="2183" y="330.5" font-family="Liberation Sans" font-size="19" fill="#3a3040" text-anchor="middle" dominant-baseline="central">580</text>
<text x="2183" y="368.0" font-family="Liberation Sans" font-size="19" fill="#3a3040" text-anchor="middle" dominant-baseline="central">620</text>
<text x="2183" y="405.5" font-family="Liberation Sans" font-size="19" fill="#f0f0f0" text-anchor="middle" dominant-baseline="central">660</text>
<text x="2183" y="443.0" font-family="Liberation Sans" font-size="19" fill="#f0f0f0" text-anchor="middle" dominant-baseline="central">700</text>
<text x="2183" y="480.5" font-family="Liberation Sans" font-size="19" fill="#f0f0f0" text-anchor="middle" dominant-baseline="central">740</text>
<text x="2183" y="518.0" font-family="Liberation Sans" font-size="19" fill="#f0f0f0" text-anchor="middle" dominant-baseline="central">780</text>
<text x="2183" y="555.5" font-family="Liberation Sans" font-size="19" fill="#f0f0f0" text-anchor="middle" dominant-baseline="central">820</text>
<text x="2183" y="593.0" font-family="Liberation Sans" font-size="19" fill="#f0f0f0" text-anchor="middle" dominant-baseline="central">860</text>
<text x="2183" y="630.5" font-family="Liberation Sans" font-size="19" fill="#f0f0f0" text-anchor="middle" dominant-baseline="central">900</text>
<g clip-path="url(#c1)"><g transform="translate(554,900) scale(0.31008)">
<rect x="-100" y="-100" width="1500" height="1500" fill="#56b84a"/>
<path d="M 200,60 L 300,140 C 430,250 570,352 700,355 C 830,355 950,280 1050,200 L 1150,120 L 1150,-50 L 200,-50 Z" fill="#ebe74c"/>
<path d="M 150,1130 L 240,1075 C 380,990 500,935 600,935 C 720,935 850,1010 970,1140 L 1040,1220 L 1040,1350 L 150,1350 Z" fill="#ebe74c"/>
<path d="M 150,170 L 200,235 C 290,360 355,480 355,620 C 355,760 270,880 150,970 L 80,1030 L -50,1030 L -50,170 Z" fill="#64c8d6"/>
<path d="M 1200,250 L 1140,305 C 1020,420 930,540 930,660 C 930,800 990,930 1080,1050 L 1120,1110 L 1350,1110 L 1350,250 Z" fill="#64c8d6"/>
<ellipse cx="640" cy="70" rx="230" ry="70" fill="#ecdc3e" filter="url(#bl3)"/>
<ellipse cx="610" cy="1200" rx="230" ry="70" fill="#ecdc3e" filter="url(#bl3)"/>
<ellipse cx="60" cy="640" rx="90" ry="330" fill="#58c2d8" filter="url(#bl3)"/>
<ellipse cx="1230" cy="700" rx="90" ry="330" fill="#58c2d8" filter="url(#bl3)"/>
</g></g>
<circle cx="753.3" cy="1099.3" r="188.5" fill="none" stroke="#d8d8d8" stroke-width="1"/>
<circle cx="1193" cy="1100.3" r="189" fill="#ebe74c"/>
<circle cx="1193" cy="1100.3" r="170.5" fill="#56b84a"/>
<circle cx="1193" cy="1100.3" r="145.5" fill="#64c8d6"/>
<circle cx="1193" cy="1100.3" r="119" fill="#56b84a"/>
<circle cx="1193" cy="1100.3" r="79" fill="#ebe74c"/>
<circle cx="1193" cy="1100" r="42" fill="#ecdc3c" filter="url(#bl3)"/>
<circle cx="1193" cy="1100.3" r="189" fill="none" stroke="#d8d8d8" stroke-width="1"/>
<g clip-path="url(#c3)"><g transform="translate(1432,900) scale(0.31008)">
<rect x="-100" y="-100" width="1500" height="1500" fill="#56b84a"/>
<path d="M -50,200 L 175,265 C 160,400 145,600 120,760 C 110,830 100,880 90,920 L -50,960 Z" fill="#ebe74c"/>
<path d="M 225,150 L 225,200 C 210,300 230,430 330,460 C 420,485 560,385 640,285 C 690,215 712,120 705,20 L 705,-50 L 225,-50 Z" fill="#64c8d6"/>
<path d="M 815,-50 L 820,55 C 835,140 880,235 940,240 C 985,240 1000,200 1005,165 L 1150,60 L 1150,-50 Z" fill="#ebe74c"/>
<path d="M 1160,330 C 1120,390 1000,440 940,520 C 880,600 830,700 790,760 C 760,800 720,810 680,795 C 600,765 460,700 340,655 C 260,630 200,680 185,780 C 170,880 175,960 150,1010 L 100,1100 L 100,1400 L 540,1400 L 540,1240 C 570,1150 640,1000 720,900 C 760,860 800,860 860,890 C 940,930 1020,990 1065,1060 L 1300,1060 L 1300,300 Z" fill="#64c8d6"/>
<path d="M 600,1300 L 610,1245 C 650,1150 720,1070 800,1045 C 880,1030 970,1060 1015,1110 L 1100,1300 Z" fill="#ebe74c"/>
<ellipse cx="350" cy="250" rx="110" ry="90" fill="#56c2d8" filter="url(#bl3)"/>
<ellipse cx="390" cy="1000" rx="120" ry="160" fill="#56c2d8" filter="url(#bl3)"/>
<ellipse cx="1140" cy="790" rx="80" ry="130" fill="#56c2d8" filter="url(#bl3)"/>
<ellipse cx="850" cy="1180" rx="120" ry="60" fill="#ecdc3c" filter="url(#bl3)"/>
</g></g>
<circle cx="1632.8" cy="1099.2" r="188.5" fill="none" stroke="#d8d8d8" stroke-width="1"/>
<circle cx="567" cy="916" r="9" fill="none" stroke="#d0d0d0" stroke-width="1.8"/><line x1="573" y1="922" x2="577" y2="926" stroke="#d0d0d0" stroke-width="1.8"/>
<circle cx="1005" cy="916" r="9" fill="none" stroke="#d0d0d0" stroke-width="1.8"/><line x1="1011" y1="922" x2="1015" y2="926" stroke="#d0d0d0" stroke-width="1.8"/>
<circle cx="1446" cy="916" r="9" fill="none" stroke="#d0d0d0" stroke-width="1.8"/><line x1="1452" y1="922" x2="1456" y2="926" stroke="#d0d0d0" stroke-width="1.8"/>
<line x1="550" y1="1297.5" x2="958" y2="1297.5" stroke="#b8b8b8" stroke-width="2"/>
<line x1="564.6" y1="1293" x2="564.6" y2="1298" stroke="#d0d0d0" stroke-width="2"/>
<line x1="596.1" y1="1293" x2="596.1" y2="1298" stroke="#d0d0d0" stroke-width="2"/>
<line x1="627.6" y1="1293" x2="627.6" y2="1298" stroke="#d0d0d0" stroke-width="2"/>
<line x1="659.1" y1="1293" x2="659.1" y2="1298" stroke="#d0d0d0" stroke-width="2"/>
<line x1="690.6" y1="1293" x2="690.6" y2="1298" stroke="#d0d0d0" stroke-width="2"/>
<line x1="722.0" y1="1293" x2="722.0" y2="1298" stroke="#d0d0d0" stroke-width="2"/>
<line x1="753.5" y1="1293" x2="753.5" y2="1298" stroke="#d0d0d0" stroke-width="2"/>
<line x1="785.0" y1="1293" x2="785.0" y2="1298" stroke="#d0d0d0" stroke-width="2"/>
<line x1="816.5" y1="1293" x2="816.5" y2="1298" stroke="#d0d0d0" stroke-width="2"/>
<line x1="848.0" y1="1293" x2="848.0" y2="1298" stroke="#d0d0d0" stroke-width="2"/>
<line x1="879.5" y1="1293" x2="879.5" y2="1298" stroke="#d0d0d0" stroke-width="2"/>
<line x1="911.0" y1="1293" x2="911.0" y2="1298" stroke="#d0d0d0" stroke-width="2"/>
<line x1="942.5" y1="1293" x2="942.5" y2="1298" stroke="#d0d0d0" stroke-width="2"/>
<line x1="989" y1="1297.5" x2="1397" y2="1297.5" stroke="#b8b8b8" stroke-width="2"/>
<line x1="1002.6" y1="1293" x2="1002.6" y2="1298" stroke="#d0d0d0" stroke-width="2"/>
<line x1="1034.2" y1="1293" x2="1034.2" y2="1298" stroke="#d0d0d0" stroke-width="2"/>
<line x1="1065.9" y1="1293" x2="1065.9" y2="1298" stroke="#d0d0d0" stroke-width="2"/>
<line x1="1097.5" y1="1293" x2="1097.5" y2="1298" stroke="#d0d0d0" stroke-width="2"/>
<line x1="1129.2" y1="1293" x2="1129.2" y2="1298" stroke="#d0d0d0" stroke-width="2"/>
<line x1="1160.8" y1="1293" x2="1160.8" y2="1298" stroke="#d0d0d0" stroke-width="2"/>
<line x1="1192.5" y1="1293" x2="1192.5" y2="1298" stroke="#d0d0d0" stroke-width="2"/>
<line x1="1224.2" y1="1293" x2="1224.2" y2="1298" stroke="#d0d0d0" stroke-width="2"/>
<line x1="1255.8" y1="1293" x2="1255.8" y2="1298" stroke="#d0d0d0" stroke-width="2"/>
<line x1="1287.5" y1="1293" x2="1287.5" y2="1298" stroke="#d0d0d0" stroke-width="2"/>
<line x1="1319.1" y1="1293" x2="1319.1" y2="1298" stroke="#d0d0d0" stroke-width="2"/>
<line x1="1350.8" y1="1293" x2="1350.8" y2="1298" stroke="#d0d0d0" stroke-width="2"/>
<line x1="1382.4" y1="1293" x2="1382.4" y2="1298" stroke="#d0d0d0" stroke-width="2"/>
<line x1="1429" y1="1297.5" x2="1838" y2="1297.5" stroke="#b8b8b8" stroke-width="2"/>
<line x1="1443.5" y1="1293" x2="1443.5" y2="1298" stroke="#d0d0d0" stroke-width="2"/>
<line x1="1475.0" y1="1293" x2="1475.0" y2="1298" stroke="#d0d0d0" stroke-width="2"/>
<line x1="1506.4" y1="1293" x2="1506.4" y2="1298" stroke="#d0d0d0" stroke-width="2"/>
<line x1="1537.9" y1="1293" x2="1537.9" y2="1298" stroke="#d0d0d0" stroke-width="2"/>
<line x1="1569.3" y1="1293" x2="1569.3" y2="1298" stroke="#d0d0d0" stroke-width="2"/>
<line x1="1600.8" y1="1293" x2="1600.8" y2="1298" stroke="#d0d0d0" stroke-width="2"/>
<line x1="1632.3" y1="1293" x2="1632.3" y2="1298" stroke="#d0d0d0" stroke-width="2"/>
<line x1="1663.7" y1="1293" x2="1663.7" y2="1298" stroke="#d0d0d0" stroke-width="2"/>
<line x1="1695.2" y1="1293" x2="1695.2" y2="1298" stroke="#d0d0d0" stroke-width="2"/>
<line x1="1726.6" y1="1293" x2="1726.6" y2="1298" stroke="#d0d0d0" stroke-width="2"/>
<line x1="1758.1" y1="1293" x2="1758.1" y2="1298" stroke="#d0d0d0" stroke-width="2"/>
<line x1="1789.6" y1="1293" x2="1789.6" y2="1298" stroke="#d0d0d0" stroke-width="2"/>
<line x1="1821.0" y1="1293" x2="1821.0" y2="1298" stroke="#d0d0d0" stroke-width="2"/>
<path d="M 2006.6 751 C 2032.6 761 2046.6 780 2045.6 807 L 2041.6 829" fill="none" stroke="#cfcfcf" stroke-width="8" stroke-linecap="round"/>
<path d="M 1966.6 845 C 1958.6 875 1970.6 907 2001.6 921" fill="none" stroke="#cfcfcf" stroke-width="8" stroke-linecap="round"/>
<circle cx="2005.3" cy="835.2" r="42" fill="#d6d6d6"/>
<circle cx="2003.6" cy="834" r="34" fill="#c8c8c8" filter="url(#bl)"/>
<circle cx="2002.6" cy="833" r="16" fill="none" stroke="#d2d2d2" stroke-width="3" filter="url(#bl)"/>
<path d="M 2006.6 948.7 C 2032.6 958.7 2046.6 977.7 2045.6 1004.7 L 2041.6 1026.7" fill="none" stroke="#cfcfcf" stroke-width="8" stroke-linecap="round"/>
<path d="M 1966.6 1042.7 C 1958.6 1072.7 1970.6 1104.7 2001.6 1118.7" fill="none" stroke="#cfcfcf" stroke-width="8" stroke-linecap="round"/>
<circle cx="2005.3" cy="1032.9" r="42" fill="#d6d6d6"/>
<circle cx="2003.6" cy="1031.7" r="34" fill="#c8c8c8" filter="url(#bl)"/>
<circle cx="2002.6" cy="1030.7" r="16" fill="none" stroke="#d2d2d2" stroke-width="3" filter="url(#bl)"/>
<path d="M 2006.6 1148.4 C 2032.6 1158.4 2046.6 1177.4 2045.6 1204.4 L 2041.6 1226.4" fill="none" stroke="#cfcfcf" stroke-width="8" stroke-linecap="round"/>
<path d="M 1966.6 1242.4 C 1958.6 1272.4 1970.6 1304.4 2001.6 1318.4" fill="none" stroke="#cfcfcf" stroke-width="8" stroke-linecap="round"/>
<circle cx="2005.3" cy="1232.6000000000001" r="42" fill="#d6d6d6"/>
<circle cx="2003.6" cy="1231.4" r="34" fill="#c8c8c8" filter="url(#bl)"/>
<circle cx="2002.6" cy="1230.4" r="16" fill="none" stroke="#d2d2d2" stroke-width="3" filter="url(#bl)"/>
<circle cx="2260" cy="896.5" r="13" fill="none" stroke="#d8d8d8" stroke-width="2"/>
<circle cx="2260" cy="890.5" r="1.8" fill="#d8d8d8"/><rect x="2258.8" y="894.5" width="2.4" height="10" fill="#d8d8d8"/>
<circle cx="2260" cy="1093.3" r="13" fill="none" stroke="#d8d8d8" stroke-width="2"/>
<circle cx="2260" cy="1087.3" r="1.8" fill="#d8d8d8"/><rect x="2258.8" y="1091.3" width="2.4" height="10" fill="#d8d8d8"/>
<circle cx="2260" cy="1297.6" r="13" fill="none" stroke="#d8d8d8" stroke-width="2"/>
<circle cx="2260" cy="1291.6" r="1.8" fill="#d8d8d8"/><rect x="2258.8" y="1295.6" width="2.4" height="10" fill="#d8d8d8"/>
<circle cx="2856.5" cy="275.6" r="62" fill="none" stroke="#cfcfcf" stroke-width="2.6"/>
<line x1="2918.5" y1="275.6" x2="2911.5" y2="275.6" stroke="#cfcfcf" stroke-width="2.5"/>
<line x1="2900.3" y1="231.8" x2="2895.4" y2="236.7" stroke="#cfcfcf" stroke-width="2.5"/>
<line x1="2856.5" y1="213.6" x2="2856.5" y2="220.6" stroke="#cfcfcf" stroke-width="2.5"/>
<line x1="2812.7" y1="231.8" x2="2817.6" y2="236.7" stroke="#cfcfcf" stroke-width="2.5"/>
<line x1="2794.5" y1="275.6" x2="2801.5" y2="275.6" stroke="#cfcfcf" stroke-width="2.5"/>
<line x1="2812.7" y1="319.4" x2="2817.6" y2="314.5" stroke="#cfcfcf" stroke-width="2.5"/>
<line x1="2856.5" y1="337.6" x2="2856.5" y2="330.6" stroke="#cfcfcf" stroke-width="2.5"/>
<line x1="2900.3" y1="319.4" x2="2895.4" y2="314.5" stroke="#cfcfcf" stroke-width="2.5"/>
<line x1="2916.1" y1="282.9" x2="2796.9" y2="268.3" stroke="#58b85a" stroke-width="2.4"/>
<line x1="2849.2" y1="335.2" x2="2863.8" y2="216.0" stroke="#d83030" stroke-width="2.4"/>
<text x="2931.5" y="275.6" transform="rotate(90 2931.5 275.6)" font-family="Liberation Sans" font-size="18" fill="#d8d8d8" text-anchor="middle" dominant-baseline="central">0°</text>
<text x="2909.5" y="222.6" transform="rotate(45 2909.5 222.6)" font-family="Liberation Sans" font-size="18" fill="#d8d8d8" text-anchor="middle" dominant-baseline="central">45°</text>
<text x="2856.5" y="200.6" transform="rotate(0 2856.5 200.6)" font-family="Liberation Sans" font-size="18" fill="#d8d8d8" text-anchor="middle" dominant-baseline="central">90°</text>
<text x="2803.5" y="222.6" transform="rotate(-45 2803.5 222.6)" font-family="Liberation Sans" font-size="18" fill="#d8d8d8" text-anchor="middle" dominant-baseline="central">135°</text>
<text x="2781.5" y="275.6" transform="rotate(-90 2781.5 275.6)" font-family="Liberation Sans" font-size="18" fill="#d8d8d8" text-anchor="middle" dominant-baseline="central">180°</text>
<text x="2803.5" y="328.6" transform="rotate(-135 2803.5 328.6)" font-family="Liberation Sans" font-size="18" fill="#d8d8d8" text-anchor="middle" dominant-baseline="central">225°</text>
<text x="2856.5" y="350.6" transform="rotate(-180 2856.5 350.6)" font-family="Liberation Sans" font-size="18" fill="#d8d8d8" text-anchor="middle" dominant-baseline="central">270°</text>
<text x="2909.5" y="328.6" transform="rotate(-225 2909.5 328.6)" font-family="Liberation Sans" font-size="18" fill="#d8d8d8" text-anchor="middle" dominant-baseline="central">315°</text>
<circle cx="2856.5" cy="594" r="62" fill="none" stroke="#cfcfcf" stroke-width="2.6"/>
<line x1="2918.5" y1="594.0" x2="2911.5" y2="594.0" stroke="#cfcfcf" stroke-width="2.5"/>
<line x1="2900.3" y1="550.2" x2="2895.4" y2="555.1" stroke="#cfcfcf" stroke-width="2.5"/>
<line x1="2856.5" y1="532.0" x2="2856.5" y2="539.0" stroke="#cfcfcf" stroke-width="2.5"/>
<line x1="2812.7" y1="550.2" x2="2817.6" y2="555.1" stroke="#cfcfcf" stroke-width="2.5"/>
<line x1="2794.5" y1="594.0" x2="2801.5" y2="594.0" stroke="#cfcfcf" stroke-width="2.5"/>
<line x1="2812.7" y1="637.8" x2="2817.6" y2="632.9" stroke="#cfcfcf" stroke-width="2.5"/>
<line x1="2856.5" y1="656.0" x2="2856.5" y2="649.0" stroke="#cfcfcf" stroke-width="2.5"/>
<line x1="2900.3" y1="637.8" x2="2895.4" y2="632.9" stroke="#cfcfcf" stroke-width="2.5"/>
<line x1="2916.4" y1="597.1" x2="2796.6" y2="590.9" stroke="#58b85a" stroke-width="2.4"/>
<line x1="2853.4" y1="653.9" x2="2859.6" y2="534.1" stroke="#d83030" stroke-width="2.4"/>
<text x="2931.5" y="594.0" transform="rotate(90 2931.5 594.0)" font-family="Liberation Sans" font-size="18" fill="#d8d8d8" text-anchor="middle" dominant-baseline="central">0°</text>
<text x="2909.5" y="541.0" transform="rotate(45 2909.5 541.0)" font-family="Liberation Sans" font-size="18" fill="#d8d8d8" text-anchor="middle" dominant-baseline="central">45°</text>
<text x="2856.5" y="519.0" transform="rotate(0 2856.5 519.0)" font-family="Liberation Sans" font-size="18" fill="#d8d8d8" text-anchor="middle" dominant-baseline="central">90°</text>
<text x="2803.5" y="541.0" transform="rotate(-45 2803.5 541.0)" font-family="Liberation Sans" font-size="18" fill="#d8d8d8" text-anchor="middle" dominant-baseline="central">135°</text>
<text x="2781.5" y="594.0" transform="rotate(-90 2781.5 594.0)" font-family="Liberation Sans" font-size="18" fill="#d8d8d8" text-anchor="middle" dominant-baseline="central">180°</text>
<text x="2803.5" y="647.0" transform="rotate(-135 2803.5 647.0)" font-family="Liberation Sans" font-size="18" fill="#d8d8d8" text-anchor="middle" dominant-baseline="central">225°</text>
<text x="2856.5" y="669.0" transform="rotate(-180 2856.5 669.0)" font-family="Liberation Sans" font-size="18" fill="#d8d8d8" text-anchor="middle" dominant-baseline="central">270°</text>
<text x="2909.5" y="647.0" transform="rotate(-225 2909.5 647.0)" font-family="Liberation Sans" font-size="18" fill="#d8d8d8" text-anchor="middle" dominant-baseline="central">315°</text>
<defs><linearGradient id="g377_0" x1="0" x2="1"><stop offset="0" stop-color="#58c83c"/><stop offset="1" stop-color="#6cd044"/></linearGradient></defs>
<rect x="2771.5" y="377" width="34.2" height="28.5" fill="url(#g377_0)"/>
<defs><linearGradient id="g377_1" x1="0" x2="1"><stop offset="0" stop-color="#7cd044"/><stop offset="1" stop-color="#b8dc44"/></linearGradient></defs>
<rect x="2805.2" y="377" width="34.2" height="28.5" fill="url(#g377_1)"/>
<defs><linearGradient id="g377_2" x1="0" x2="1"><stop offset="0" stop-color="#d8e040"/><stop offset="1" stop-color="#f4d838"/></linearGradient></defs>
<rect x="2838.9" y="377" width="34.2" height="28.5" fill="url(#g377_2)"/>
<defs><linearGradient id="g377_3" x1="0" x2="1"><stop offset="0" stop-color="#f4a030"/><stop offset="1" stop-color="#f07028"/></linearGradient></defs>
<rect x="2872.6" y="377" width="34.2" height="28.5" fill="url(#g377_3)"/>
<defs><linearGradient id="g377_4" x1="0" x2="1"><stop offset="0" stop-color="#ec4028"/><stop offset="1" stop-color="#e82020"/></linearGradient></defs>
<rect x="2906.3" y="377" width="34.2" height="28.5" fill="url(#g377_4)"/>
<path d="M 2776.35 401.25 L 2787.85 380.25 L 2799.35 401.25 Z" fill="none" stroke="#1a3a1a" stroke-width="3"/>
<rect x="2820.05" y="384.25" width="4" height="4" fill="#505030"/><rect x="2820.05" y="393.25" width="4" height="4" fill="#505030"/>
<rect x="2853.75" y="384.25" width="4" height="4" fill="#505030"/><rect x="2853.75" y="393.25" width="4" height="4" fill="#505030"/>
<rect x="2887.45" y="384.25" width="4" height="4" fill="#505030"/><rect x="2887.45" y="393.25" width="4" height="4" fill="#505030"/>
<path d="M 2919.15 386.25 L 2927.15 396.25 M 2927.15 386.25 L 2919.15 396.25" stroke="#a02020" stroke-width="2"/>
<defs><linearGradient id="g696_0" x1="0" x2="1"><stop offset="0" stop-color="#58c83c"/><stop offset="1" stop-color="#6cd044"/></linearGradient></defs>
<rect x="2771.5" y="696.4" width="34.2" height="27.899999999999977" fill="url(#g696_0)"/>
<defs><linearGradient id="g696_1" x1="0" x2="1"><stop offset="0" stop-color="#7cd044"/><stop offset="1" stop-color="#b8dc44"/></linearGradient></defs>
<rect x="2805.2" y="696.4" width="34.2" height="27.899999999999977" fill="url(#g696_1)"/>
<defs><linearGradient id="g696_2" x1="0" x2="1"><stop offset="0" stop-color="#d8e040"/><stop offset="1" stop-color="#f4d838"/></linearGradient></defs>
<rect x="2838.9" y="696.4" width="34.2" height="27.899999999999977" fill="url(#g696_2)"/>
<defs><linearGradient id="g696_3" x1="0" x2="1"><stop offset="0" stop-color="#f4a030"/><stop offset="1" stop-color="#f07028"/></linearGradient></defs>
<rect x="2872.6" y="696.4" width="34.2" height="27.899999999999977" fill="url(#g696_3)"/>
<defs><linearGradient id="g696_4" x1="0" x2="1"><stop offset="0" stop-color="#ec4028"/><stop offset="1" stop-color="#e82020"/></linearGradient></defs>
<rect x="2906.3" y="696.4" width="34.2" height="27.899999999999977" fill="url(#g696_4)"/>
<path d="M 2776.35 720.3499999999999 L 2787.85 699.3499999999999 L 2799.35 720.3499999999999 Z" fill="none" stroke="#1a3a1a" stroke-width="3"/>
<rect x="2820.05" y="703.3499999999999" width="4" height="4" fill="#505030"/><rect x="2820.05" y="712.3499999999999" width="4" height="4" fill="#505030"/>
<rect x="2853.75" y="703.3499999999999" width="4" height="4" fill="#505030"/><rect x="2853.75" y="712.3499999999999" width="4" height="4" fill="#505030"/>
<rect x="2887.45" y="703.3499999999999" width="4" height="4" fill="#505030"/><rect x="2887.45" y="712.3499999999999" width="4" height="4" fill="#505030"/>
<path d="M 2919.15 705.3499999999999 L 2927.15 715.3499999999999 M 2927.15 705.3499999999999 L 2919.15 715.3499999999999" stroke="#a02020" stroke-width="2"/>
<defs><linearGradient id="g1031_0" x1="0" x2="1"><stop offset="0" stop-color="#58c83c"/><stop offset="1" stop-color="#6cd044"/></linearGradient></defs>
<rect x="2771.5" y="1031.5" width="34.2" height="27.5" fill="url(#g1031_0)"/>
<defs><linearGradient id="g1031_1" x1="0" x2="1"><stop offset="0" stop-color="#7cd044"/><stop offset="1" stop-color="#b8dc44"/></linearGradient></defs>
<rect x="2805.2" y="1031.5" width="34.2" height="27.5" fill="url(#g1031_1)"/>
<defs><linearGradient id="g1031_2" x1="0" x2="1"><stop offset="0" stop-color="#d8e040"/><stop offset="1" stop-color="#f4d838"/></linearGradient></defs>
<rect x="2838.9" y="1031.5" width="34.2" height="27.5" fill="url(#g1031_2)"/>
<defs><linearGradient id="g1031_3" x1="0" x2="1"><stop offset="0" stop-color="#f4a030"/><stop offset="1" stop-color="#f07028"/></linearGradient></defs>
<rect x="2872.6" y="1031.5" width="34.2" height="27.5" fill="url(#g1031_3)"/>
<defs><linearGradient id="g1031_4" x1="0" x2="1"><stop offset="0" stop-color="#ec4028"/><stop offset="1" stop-color="#e82020"/></linearGradient></defs>
<rect x="2906.3" y="1031.5" width="34.2" height="27.5" fill="url(#g1031_4)"/>
<rect x="2786.35" y="1038.25" width="4" height="4" fill="#505030"/><rect x="2786.35" y="1047.25" width="4" height="4" fill="#505030"/>
<path d="M 2810.05 1055.25 L 2821.55 1034.25 L 2833.05 1055.25 Z" fill="none" stroke="#1a3a1a" stroke-width="3"/>
<rect x="2853.75" y="1038.25" width="4" height="4" fill="#505030"/><rect x="2853.75" y="1047.25" width="4" height="4" fill="#505030"/>
<rect x="2887.45" y="1038.25" width="4" height="4" fill="#505030"/><rect x="2887.45" y="1047.25" width="4" height="4" fill="#505030"/>
<path d="M 2919.15 1040.25 L 2927.15 1050.25 M 2927.15 1040.25 L 2919.15 1050.25" stroke="#a02020" stroke-width="2"/>
<ellipse cx="2580.5" cy="861" rx="10.5" ry="9" fill="#f4f4f4"/>
<circle cx="2581" cy="909" r="9" fill="none" stroke="#f0f0f0" stroke-width="3.5"/>
<path d="M 2567 956 L 2595 956 M 2580.5 942 L 2580.5 970" stroke="#e8e8e8" stroke-width="2.5"/><rect x="2577" y="952.5" width="7" height="7" fill="#1c1c1c"/>
<rect x="2572" y="993" width="18" height="18" fill="none" stroke="#f0f0f0" stroke-width="3.5"/>
<path d="M 2490.8 428 L 2501 439 L 2490.8 450 L 2480.6 439 Z" fill="#ffffff"/>
<path d="M 2495.5 744 L 2507 755.5 L 2495.5 767 L 2484 755.5 Z" fill="none" stroke="#f0f0f0" stroke-width="2.5"/>
<rect x="2842" y="1484" width="18" height="18" fill="#e0e0e0"/></svg>
<div class="t" style="left:53px;top:1.0px;font-size:25px;color:#e4e4e4;font-family:'Liberation Sans', sans-serif;transform:scaleX(1.0892);transform-origin:left center;">Patient(M)</div>
<div class="t" style="left:210.3px;top:1.0px;font-size:25px;color:#e4e4e4;font-family:'Liberation Sans', sans-serif;transform:scaleX(0.9268);transform-origin:left center;">Scan(S)</div>
<div class="t" style="left:328px;top:1.0px;font-size:25px;color:#e4e4e4;font-family:'Liberation Sans', sans-serif;transform:scaleX(0.9896);transform-origin:left center;">Settings(T)</div>
<div class="t" style="left:491px;top:1.0px;font-size:25px;color:#e4e4e4;font-family:'Liberation Sans', sans-serif;transform:scaleX(1.0593);transform-origin:left center;">Third-party application</div>
<div class="t" style="left:1346.6px;top:1.0px;font-size:25px;color:#e4e4e4;font-family:'Liberation Sans', sans-serif;transform:scaleX(1.0333);transform-origin:left center;">Scansys - IOL Optimization</div>
<div class="t" style="left:2133.7px;top:1.0px;font-size:25px;color:#3cb83c;font-family:'Liberation Sans', sans-serif;transform:scaleX(0.9793);transform-origin:left center;">220GB(Free)/275GB</div>
<div class="t" style="left:2387.6px;top:1.0px;font-size:25px;color:#e4e4e4;font-family:'Liberation Sans', sans-serif;transform:scaleX(1.0151);transform-origin:left center;">Data Statistics</div>
<div class="t" style="left:2590px;top:1.0px;font-size:25px;color:#e4e4e4;font-family:'Liberation Sans', sans-serif;transform:scaleX(0.9919);transform-origin:left center;">Save Picture(I)</div>
<div class="t" style="left:2782px;top:1.0px;font-size:25px;color:#e4e4e4;font-family:'Liberation Sans', sans-serif;transform:scaleX(0.9000);transform-origin:left center;">PDF</div>
<div class="t" style="left:2867.6px;top:1.0px;font-size:25px;color:#e4e4e4;font-family:'Liberation Sans', sans-serif;transform:scaleX(1.0905);transform-origin:left center;">Print(P)</div>
<div class="t" style="left:168px;top:68.3px;font-size:26px;color:#ffffff;font-family:'Liberation Mono', monospace;transform:scaleX(0.7786);transform-origin:left center;">2024-07-12 14:40:56 Right</div>
<div class="t" style="left:73.4px;top:125.6px;font-size:25px;color:#e4e4e4;font-family:'Liberation Sans', sans-serif;transform:scaleX(1.0140);transform-origin:left center;">First Name:</div>
<div class="t" style="left:229px;top:121.5px;font-size:25px;color:#e4e4e4;font-family:'Liberation Sans', sans-serif;transform:scaleX(1.0407);transform-origin:left center;">MediWorks_Demo</div>
<div class="t" style="left:73.4px;top:166.7px;font-size:25px;color:#e4e4e4;font-family:'Liberation Sans', sans-serif;transform:scaleX(1.0020);transform-origin:left center;">Last Name:</div>
<div class="t" style="left:73.4px;top:207.3px;font-size:25px;color:#e4e4e4;font-family:'Liberation Sans', sans-serif;transform:scaleX(0.9172);transform-origin:left center;">PID:</div>
<div class="t" style="left:229px;top:207.3px;font-size:25px;color:#e4e4e4;font-family:'Liberation Sans', sans-serif;transform:scaleX(0.9780);transform-origin:left center;">000008</div>
<div class="t" style="left:73.4px;top:250.0px;font-size:25px;color:#e4e4e4;font-family:'Liberation Sans', sans-serif;transform:scaleX(0.9587);transform-origin:left center;">DOB:</div>
<div class="t" style="left:229px;top:250.0px;font-size:25px;color:#e4e4e4;font-family:'Liberation Sans', sans-serif;transform:scaleX(1.0095);transform-origin:left center;">1966-02-18&nbsp; (58)</div>
<div class="t" style="left:73.4px;top:290.8px;font-size:25px;color:#e4e4e4;font-family:'Liberation Sans', sans-serif;transform:scaleX(0.9962);transform-origin:left center;">Gender:</div>
<div class="t" style="left:229px;top:290.8px;font-size:25px;color:#e4e4e4;font-family:'Liberation Sans', sans-serif;transform:scaleX(1.0027);transform-origin:left center;">Female</div>
<div class="t" style="left:73.4px;top:331.6px;font-size:25px;color:#e4e4e4;font-family:'Liberation Sans', sans-serif;transform:scaleX(0.8914);transform-origin:left center;">Eye:</div>
<div class="t" style="left:229px;top:331.6px;font-size:25px;color:#e4e4e4;font-family:'Liberation Sans', sans-serif;transform:scaleX(1.0278);transform-origin:left center;">Right</div>
<div class="t" style="left:73.4px;top:372.3px;font-size:25px;color:#e4e4e4;font-family:'Liberation Sans', sans-serif;transform:scaleX(0.9939);transform-origin:left center;">Time:</div>
<div class="t" style="left:229px;top:372.3px;font-size:25px;color:#e4e4e4;font-family:'Liberation Sans', sans-serif;transform:scaleX(1.0062);transform-origin:left center;">2024-07-12 14:40:56</div>
<div class="t" style="left:73.4px;top:413.0px;font-size:25px;color:#e4e4e4;font-family:'Liberation Sans', sans-serif;transform:scaleX(0.9835);transform-origin:left center;">Remarks:</div>
<div class="t" style="left:74.6px;top:461.7px;font-size:29px;color:#e2e2e2;font-family:'Liberation Sans', sans-serif;transform:scaleX(0.9962);transform-origin:left center;">Overview</div>
<div class="t" style="left:74.6px;top:515.0px;font-size:29px;color:#e2e2e2;font-family:'Liberation Sans', sans-serif;transform:scaleX(0.9988);transform-origin:left center;">Large Selectable Map</div>
<div class="t" style="left:74.4px;top:568.3px;font-size:29px;color:#e2e2e2;font-family:'Liberation Sans', sans-serif;transform:scaleX(1.0147);transform-origin:left center;">Scheimpflug Images</div>
<div class="t" style="left:74.4px;top:621.6px;font-size:29px;color:#e2e2e2;font-family:'Liberation Sans', sans-serif;transform:scaleX(1.0081);transform-origin:left center;">Refractive 4 Maps</div>
<div class="t" style="left:74.4px;top:674.8px;font-size:29px;color:#e2e2e2;font-family:'Liberation Sans', sans-serif;transform:scaleX(0.9958);transform-origin:left center;">Selectable 4 Maps</div>
<div class="t" style="left:74.4px;top:728.1px;font-size:29px;color:#e2e2e2;font-family:'Liberation Sans', sans-serif;transform:scaleX(0.9677);transform-origin:left center;">Lens Analysis</div>
<div class="t" style="left:74.4px;top:781.4px;font-size:29px;color:#e2e2e2;font-family:'Liberation Sans', sans-serif;transform:scaleX(1.0185);transform-origin:left center;">Chamber Angle</div>
<div class="t" style="left:74.4px;top:834.7px;font-size:29px;color:#e2e2e2;font-family:'Liberation Sans', sans-serif;transform:scaleX(0.9741);transform-origin:left center;">Shape Factor</div>
<div class="t" style="left:74.7px;top:888.0px;font-size:29px;color:#e2e2e2;font-family:'Liberation Sans', sans-serif;transform:scaleX(0.9922);transform-origin:left center;">Pachymetric</div>
<div class="t" style="left:74.7px;top:941.3px;font-size:29px;color:#e2e2e2;font-family:'Liberation Sans', sans-serif;transform:scaleX(0.9750);transform-origin:left center;">Refractive Power</div>
<div class="t" style="left:74.7px;top:994.6px;font-size:29px;color:#e2e2e2;font-family:'Liberation Sans', sans-serif;transform:scaleX(1.0388);transform-origin:left center;">Aberration</div>
<div class="t" style="left:74.7px;top:1047.9px;font-size:29px;color:#e2e2e2;font-family:'Liberation Sans', sans-serif;transform:scaleX(0.9842);transform-origin:left center;">Keratoconus Analysis</div>
<div class="t" style="left:99.4px;top:1101.2px;font-size:29px;color:#e2e2e2;font-family:'Liberation Sans', sans-serif;transform:scaleX(0.9831);transform-origin:left center;">Contact Lens</div>
<div class="t" style="left:81.7px;top:1106.4px;font-size:18px;color:#cfcfcf;font-family:'Liberation Sans', sans-serif;transform:translateX(-50%);transform-origin:center center;">&#8226;</div>
<div class="t" style="left:99.4px;top:1154.4px;font-size:29px;color:#e2e2e2;font-family:'Liberation Sans', sans-serif;transform:scaleX(1.0020);transform-origin:left center;">IOL Calculation</div>
<div class="t" style="left:81.7px;top:1159.7px;font-size:18px;color:#cfcfcf;font-family:'Liberation Sans', sans-serif;transform:translateX(-50%);transform-origin:center center;">&#8226;</div>
<div class="t" style="left:105px;top:1209.2px;font-size:26px;color:#e2e2e2;font-family:'Liberation Sans', sans-serif;transform:scaleX(1.0334);transform-origin:left center;">Universal</div>
<div class="t" style="left:105px;top:1262.5px;font-size:26px;color:#e2e2e2;font-family:'Liberation Sans', sans-serif;transform:scaleX(1.0323);transform-origin:left center;">Post Refractive</div>
<div class="t" style="left:105px;top:1315.8px;font-size:26px;color:#e2e2e2;font-family:'Liberation Sans', sans-serif;transform:scaleX(1.0807);transform-origin:left center;">Astigmatism</div>
<div class="t" style="left:74.7px;top:1367.6px;font-size:29px;color:#4cb848;font-family:'Liberation Sans', sans-serif;transform:scaleX(1.0418);transform-origin:left center;">IOL Optimization</div>
<div class="t" style="left:74.7px;top:1420.9px;font-size:29px;color:#e2e2e2;font-family:'Liberation Sans', sans-serif;transform:scaleX(0.8413);transform-origin:left center;">ICRS</div>
<div class="t" style="left:74.7px;top:1474.2px;font-size:29px;color:#e2e2e2;font-family:'Liberation Sans', sans-serif;transform:scaleX(0.9951);transform-origin:left center;">Fourier Analysis</div>
<div class="t" style="left:923px;top:47.5px;font-size:26px;color:#e4e4e4;font-family:'Liberation Sans', sans-serif;transform:scaleX(0.9928);transform-origin:left center;">Cornea Power</div>
<div class="t" style="left:594px;top:97.0px;font-size:25px;color:#e4e4e4;font-family:'Liberation Sans', sans-serif;transform:scaleX(1.0181);transform-origin:left center;">Dia.(mm):</div>
<div class="t" style="left:804.7px;top:98.6px;font-size:25px;color:#e4e4e4;font-family:'Liberation Sans', sans-serif;transform:scaleX(1.0067);transform-origin:left center;">2.5</div>
<div class="t" style="left:1041.5px;top:98.6px;font-size:25px;color:#e4e4e4;font-family:'Liberation Sans', sans-serif;transform:scaleX(1.0211);transform-origin:left center;">3.0</div>
<div class="t" style="left:1278.3px;top:98.6px;font-size:25px;color:#e4e4e4;font-family:'Liberation Sans', sans-serif;transform:scaleX(1.0384);transform-origin:left center;">4.0</div>
<div class="t" style="left:770px;top:157.4px;font-size:24px;color:#f0f0f0;font-family:'Liberation Sans', sans-serif;font-weight:bold;transform:scaleX(1.0098);transform-origin:left center;">K1(D),@</div>
<div class="t" style="left:961px;top:157.4px;font-size:24px;color:#f0f0f0;font-family:'Liberation Sans', sans-serif;font-weight:bold;transform:scaleX(1.0098);transform-origin:left center;">K2(D),@</div>
<div class="t" style="left:1150px;top:157.4px;font-size:24px;color:#f0f0f0;font-family:'Liberation Sans', sans-serif;font-weight:bold;transform:scaleX(0.9858);transform-origin:left center;">Astig(D)</div>
<div class="t" style="left:1350px;top:157.4px;font-size:24px;color:#f0f0f0;font-family:'Liberation Sans', sans-serif;font-weight:bold;transform:scaleX(1.0278);transform-origin:left center;">Km(D)</div>
<div class="t" style="left:585.4px;top:223.0px;font-size:25px;color:#e4e4e4;font-family:'Liberation Sans', sans-serif;transform:scaleX(1.0185);transform-origin:left center;">SimK A</div>
<div class="t" style="left:566px;top:256.0px;font-size:25px;color:#e4e4e4;font-family:'Liberation Sans', sans-serif;transform:scaleX(1.0195);transform-origin:left center;">(n=1.3375)</div>
<div class="t" style="left:593px;top:327.7px;font-size:25px;color:#e4e4e4;font-family:'Liberation Sans', sans-serif;transform:scaleX(0.9430);transform-origin:left center;">TCP B</div>
<div class="t" style="left:552.4px;top:360.7px;font-size:25px;color:#e4e4e4;font-family:'Liberation Sans', sans-serif;transform:scaleX(1.0010);transform-origin:left center;">(Ray Tracing)</div>
<div class="t" style="left:591px;top:450.0px;font-size:25px;color:#e4e4e4;font-family:'Liberation Sans', sans-serif;transform:scaleX(0.9925);transform-origin:left center;">TNP C</div>
<div class="t" style="left:583.5px;top:555.0px;font-size:25px;color:#e4e4e4;font-family:'Liberation Sans', sans-serif;transform:scaleX(1.0538);transform-origin:left center;"><span style="font-size:15px;vertical-align:3px">&#9651;</span>(B - A)</div>
<div class="t" style="left:583.5px;top:660.0px;font-size:25px;color:#e4e4e4;font-family:'Liberation Sans', sans-serif;transform:scaleX(1.0366);transform-origin:left center;"><span style="font-size:15px;vertical-align:3px">&#9651;</span>(C - A)</div>
<div class="t" style="left:747px;top:240.3px;font-size:25px;color:#80c880;font-family:'Liberation Sans', sans-serif;transform:scaleX(0.9953);transform-origin:left center;">40.25@172°</div>
<div class="t" style="left:944.5px;top:240.3px;font-size:25px;color:#e23a3a;font-family:'Liberation Sans', sans-serif;transform:scaleX(0.9877);transform-origin:left center;">40.58@82°</div>
<div class="t" style="left:1167.7px;top:240.3px;font-size:25px;color:#e4e4e4;font-family:'Liberation Sans', sans-serif;transform:scaleX(1.0055);transform-origin:left center;">-0.33</div>
<div class="t" style="left:1356px;top:240.3px;font-size:25px;color:#e4e4e4;font-family:'Liberation Sans', sans-serif;transform:scaleX(0.9750);transform-origin:left center;">40.42</div>
<div class="t" style="left:747px;top:345.0px;font-size:25px;color:#80c880;font-family:'Liberation Sans', sans-serif;transform:scaleX(0.9953);transform-origin:left center;">40.13@160°</div>
<div class="t" style="left:944.5px;top:345.0px;font-size:25px;color:#e23a3a;font-family:'Liberation Sans', sans-serif;transform:scaleX(0.9877);transform-origin:left center;">40.35@70°</div>
<div class="t" style="left:1167.7px;top:345.0px;font-size:25px;color:#e4e4e4;font-family:'Liberation Sans', sans-serif;transform:scaleX(1.0055);transform-origin:left center;">-0.22</div>
<div class="t" style="left:1356px;top:345.0px;font-size:25px;color:#e4e4e4;font-family:'Liberation Sans', sans-serif;transform:scaleX(0.9750);transform-origin:left center;">40.24</div>
<div class="t" style="left:747px;top:450.0px;font-size:25px;color:#80c880;font-family:'Liberation Sans', sans-serif;transform:scaleX(0.9953);transform-origin:left center;">39.31@161°</div>
<div class="t" style="left:944.5px;top:450.0px;font-size:25px;color:#e23a3a;font-family:'Liberation Sans', sans-serif;transform:scaleX(0.9877);transform-origin:left center;">39.52@71°</div>
<div class="t" style="left:1167.7px;top:450.0px;font-size:25px;color:#e4e4e4;font-family:'Liberation Sans', sans-serif;transform:scaleX(1.0055);transform-origin:left center;">-0.21</div>
<div class="t" style="left:1356px;top:450.0px;font-size:25px;color:#e4e4e4;font-family:'Liberation Sans', sans-serif;transform:scaleX(0.9750);transform-origin:left center;">39.42</div>
<div class="t" style="left:750.4px;top:555.0px;font-size:25px;color:#80c880;font-family:'Liberation Sans', sans-serif;transform:scaleX(0.9880);transform-origin:left center;">-0.12</div>
<div class="t" style="left:832px;top:555.0px;font-size:25px;color:#80c880;font-family:'Liberation Sans', sans-serif;transform:scaleX(0.9666);transform-origin:left center;">-12°</div>
<div class="t" style="left:938.7px;top:555.0px;font-size:25px;color:#e23a3a;font-family:'Liberation Sans', sans-serif;transform:scaleX(1.0231);transform-origin:left center;">-0.23</div>
<div class="t" style="left:1020px;top:555.0px;font-size:25px;color:#e23a3a;font-family:'Liberation Sans', sans-serif;transform:scaleX(1.0143);transform-origin:left center;">-12°</div>
<div class="t" style="left:1171.6px;top:555.0px;font-size:25px;color:#e4e4e4;font-family:'Liberation Sans', sans-serif;transform:scaleX(1.0126);transform-origin:left center;">0.11</div>
<div class="t" style="left:1358px;top:555.0px;font-size:25px;color:#e4e4e4;font-family:'Liberation Sans', sans-serif;transform:scaleX(1.0354);transform-origin:left center;">-0.18</div>
<div class="t" style="left:750.4px;top:660.0px;font-size:25px;color:#80c880;font-family:'Liberation Sans', sans-serif;transform:scaleX(0.9880);transform-origin:left center;">-0.94</div>
<div class="t" style="left:832px;top:660.0px;font-size:25px;color:#80c880;font-family:'Liberation Sans', sans-serif;transform:scaleX(1.0072);transform-origin:left center;">-11°</div>
<div class="t" style="left:938.7px;top:660.0px;font-size:25px;color:#e23a3a;font-family:'Liberation Sans', sans-serif;transform:scaleX(1.0231);transform-origin:left center;">-1.06</div>
<div class="t" style="left:1020px;top:660.0px;font-size:25px;color:#e23a3a;font-family:'Liberation Sans', sans-serif;transform:scaleX(1.0569);transform-origin:left center;">-11°</div>
<div class="t" style="left:1171.6px;top:660.0px;font-size:25px;color:#e4e4e4;font-family:'Liberation Sans', sans-serif;transform:scaleX(0.9739);transform-origin:left center;">0.12</div>
<div class="t" style="left:1358px;top:660.0px;font-size:25px;color:#e4e4e4;font-family:'Liberation Sans', sans-serif;transform:scaleX(1.0354);transform-origin:left center;">-1.00</div>
<div class="t" style="left:1709px;top:49.5px;font-size:26px;color:#e4e4e4;font-family:'Liberation Sans', sans-serif;transform:scaleX(0.9685);transform-origin:left center;">Cornea Thickness</div>
<div class="t" style="left:2075.5px;top:104.5px;font-size:24px;color:#e8e8e8;font-family:'Liberation Sans', sans-serif;transform:scaleX(0.8902);transform-origin:left center;">AK</div>
<div class="t" style="left:2213px;top:659.4px;font-size:20px;color:#d8d8d8;font-family:'Liberation Sans', sans-serif;transform:translateX(-50%);transform-origin:center center;">10μm</div>
<div class="t" style="left:2213px;top:695.4px;font-size:20px;color:#d8d8d8;font-family:'Liberation Sans', sans-serif;transform:translateX(-50%);transform-origin:center center;">Abs</div>
<div class="t" style="left:2305px;top:73.7px;font-size:34px;color:#f0f0f0;font-family:'Liberation Mono', monospace;transform:scaleX(0.8746);transform-origin:left center;">Scan Quality:</div>
<div class="t" style="left:2695px;top:51.2px;font-size:33px;color:#3cae46;font-family:'Liberation Sans', sans-serif;transform:scaleX(0.9227);transform-origin:left center;">OK</div>
<div class="t" style="left:2543.6px;top:109.0px;font-size:25px;color:#e4e4e4;font-family:'Liberation Sans', sans-serif;transform:scaleX(1.0388);transform-origin:left center;">Min Dia.(F)=11.4</div>
<div class="t" style="left:2751px;top:109.0px;font-size:25px;color:#e4e4e4;font-family:'Liberation Sans', sans-serif;transform:scaleX(1.0410);transform-origin:left center;">Min Dia.(B)=10.2</div>
<div class="t" style="left:2515.7px;top:159.0px;font-size:27px;color:#e4e4e4;font-family:'Liberation Sans', sans-serif;transform:scaleX(1.0405);transform-origin:left center;">Cornea (F)-SimK</div>
<div class="t" style="left:2312.6px;top:200.1px;font-size:29px;color:#80c880;font-family:'Liberation Sans', sans-serif;transform:scaleX(0.9744);transform-origin:left center;">K1/Rh:</div>
<div class="t" style="left:2449px;top:200.1px;font-size:29px;color:#80c880;font-family:'Liberation Sans', sans-serif;transform:scaleX(1.0326);transform-origin:left center;">40.30D@173°/8.37mm</div>
<div class="t" style="left:2312.6px;top:243.1px;font-size:29px;color:#e23a3a;font-family:'Liberation Sans', sans-serif;transform:scaleX(0.9583);transform-origin:left center;">K2/Rv:</div>
<div class="t" style="left:2449px;top:243.1px;font-size:29px;color:#e23a3a;font-family:'Liberation Sans', sans-serif;transform:scaleX(1.0300);transform-origin:left center;">40.90D@83°/8.25mm</div>
<div class="t" style="left:2312.6px;top:288.1px;font-size:29px;color:#e6e6e6;font-family:'Liberation Sans', sans-serif;transform:scaleX(0.9912);transform-origin:left center;">Km/Rm:</div>
<div class="t" style="left:2449px;top:288.1px;font-size:29px;color:#e6e6e6;font-family:'Liberation Sans', sans-serif;transform:scaleX(1.0445);transform-origin:left center;">40.60D/8.31mm</div>
<div class="t" style="left:2312.6px;top:332.1px;font-size:29px;color:#e6e6e6;font-family:'Liberation Sans', sans-serif;transform:scaleX(1.0258);transform-origin:left center;">Astig:</div>
<div class="t" style="left:2450.5px;top:332.1px;font-size:29px;color:#e6e6e6;font-family:'Liberation Sans', sans-serif;transform:scaleX(1.0063);transform-origin:left center;">-0.60D @ 173°</div>
<div class="t" style="left:2309.5px;top:377.1px;font-size:29px;color:#e6e6e6;font-family:'Liberation Sans', sans-serif;transform:scaleX(0.9733);transform-origin:left center;">ecc(8mm):</div>
<div class="t" style="left:2461.4px;top:377.1px;font-size:29px;color:#e6e6e6;font-family:'Liberation Sans', sans-serif;transform:scaleX(0.9619);transform-origin:left center;">0.60</div>
<div class="t" style="left:2667px;top:380.5px;font-size:25px;color:#e4e4e4;font-family:'Liberation Sans', sans-serif;transform:scaleX(0.9560);transform-origin:left center;">Grade: 0</div>
<div class="t" style="left:2312.6px;top:425.1px;font-size:29px;color:#e4e4e4;font-family:'Liberation Sans', sans-serif;transform:scaleX(1.0011);transform-origin:left center;">Kmax/Rmin:</div>
<div class="t" style="left:2506.4px;top:425.1px;font-size:29px;color:#e4e4e4;font-family:'Liberation Sans', sans-serif;transform:scaleX(0.9528);transform-origin:left center;">41.83D/8.07mm(0.66mm@260°)</div>
<div class="t" style="left:2556px;top:486.5px;font-size:27px;color:#e4e4e4;font-family:'Liberation Sans', sans-serif;transform:scaleX(1.0197);transform-origin:left center;">Cornea(B)</div>
<div class="t" style="left:2312.6px;top:524.1px;font-size:29px;color:#80c880;font-family:'Liberation Sans', sans-serif;transform:scaleX(0.9744);transform-origin:left center;">K1/Rh:</div>
<div class="t" style="left:2447.4px;top:524.1px;font-size:29px;color:#80c880;font-family:'Liberation Sans', sans-serif;transform:scaleX(1.0288);transform-origin:left center;">-5.50D@177°/7.27mm</div>
<div class="t" style="left:2312.6px;top:566.1px;font-size:29px;color:#e23a3a;font-family:'Liberation Sans', sans-serif;transform:scaleX(0.9583);transform-origin:left center;">K2/Rv:</div>
<div class="t" style="left:2447.4px;top:566.1px;font-size:29px;color:#e23a3a;font-family:'Liberation Sans', sans-serif;transform:scaleX(1.0331);transform-origin:left center;">-5.65D@87°/7.08mm</div>
<div class="t" style="left:2312.6px;top:608.1px;font-size:29px;color:#e6e6e6;font-family:'Liberation Sans', sans-serif;transform:scaleX(0.9912);transform-origin:left center;">Km/Rm:</div>
<div class="t" style="left:2447.4px;top:608.1px;font-size:29px;color:#e6e6e6;font-family:'Liberation Sans', sans-serif;transform:scaleX(1.0472);transform-origin:left center;">-5.57D/7.18mm</div>
<div class="t" style="left:2312.6px;top:651.5px;font-size:29px;color:#e6e6e6;font-family:'Liberation Sans', sans-serif;transform:scaleX(1.0258);transform-origin:left center;">Astig:</div>
<div class="t" style="left:2446px;top:651.5px;font-size:29px;color:#e6e6e6;font-family:'Liberation Sans', sans-serif;transform:scaleX(0.9993);transform-origin:left center;">0.15D @ 177°</div>
<div class="t" style="left:2309.5px;top:696.1px;font-size:29px;color:#e6e6e6;font-family:'Liberation Sans', sans-serif;transform:scaleX(0.9733);transform-origin:left center;">ecc(8mm):</div>
<div class="t" style="left:2461.4px;top:696.1px;font-size:29px;color:#e6e6e6;font-family:'Liberation Sans', sans-serif;transform:scaleX(0.9619);transform-origin:left center;">0.39</div>
<div class="t" style="left:2667px;top:700.0px;font-size:25px;color:#e4e4e4;font-family:'Liberation Sans', sans-serif;transform:scaleX(0.9560);transform-origin:left center;">Grade: 0</div>
<div class="t" style="left:2312.6px;top:741.6px;font-size:29px;color:#e4e4e4;font-family:'Liberation Sans', sans-serif;transform:scaleX(1.0011);transform-origin:left center;">Kmax/Rmin:</div>
<div class="t" style="left:2521.9px;top:741.6px;font-size:29px;color:#e4e4e4;font-family:'Liberation Sans', sans-serif;transform:scaleX(0.9486);transform-origin:left center;">-5.89D/6.80mm(3.03mm@269°)</div>
<div class="t" style="left:2590px;top:803.6px;font-size:29px;color:#e4e4e4;font-family:'Liberation Sans', sans-serif;transform:scaleX(0.9627);transform-origin:left center;">Pachy</div>
<div class="t" style="left:2795px;top:803.6px;font-size:29px;color:#e4e4e4;font-family:'Liberation Sans', sans-serif;transform:scaleX(0.9561);transform-origin:left center;">R @ θ</div>
<div class="t" style="left:2314px;top:847.1px;font-size:29px;color:#e4e4e4;font-family:'Liberation Sans', sans-serif;transform:scaleX(0.9842);transform-origin:left center;">Apex:</div>
<div class="t" style="left:2612px;top:847.1px;font-size:29px;color:#e4e4e4;font-family:'Liberation Sans', sans-serif;transform:scaleX(1.0194);transform-origin:left center;">483μm</div>
<div class="t" style="left:2745px;top:847.1px;font-size:29px;color:#e4e4e4;font-family:'Liberation Sans', sans-serif;transform:scaleX(1.0159);transform-origin:left center;">0.00mm@0°</div>
<div class="t" style="left:2314px;top:895.1px;font-size:29px;color:#e4e4e4;font-family:'Liberation Sans', sans-serif;transform:scaleX(0.9891);transform-origin:left center;">Thinnest:</div>
<div class="t" style="left:2612px;top:895.1px;font-size:29px;color:#e4e4e4;font-family:'Liberation Sans', sans-serif;transform:scaleX(1.0194);transform-origin:left center;">478μm</div>
<div class="t" style="left:2729.6px;top:895.1px;font-size:29px;color:#e4e4e4;font-family:'Liberation Sans', sans-serif;transform:scaleX(1.0332);transform-origin:left center;">1.02mm@211°</div>
<div class="t" style="left:2314px;top:941.6px;font-size:29px;color:#e4e4e4;font-family:'Liberation Sans', sans-serif;transform:scaleX(0.9681);transform-origin:left center;">Pupil C.(Kappa):</div>
<div class="t" style="left:2612px;top:941.6px;font-size:29px;color:#e4e4e4;font-family:'Liberation Sans', sans-serif;transform:scaleX(1.0194);transform-origin:left center;">482μm</div>
<div class="t" style="left:2729.6px;top:941.6px;font-size:29px;color:#e4e4e4;font-family:'Liberation Sans', sans-serif;transform:scaleX(1.0217);transform-origin:left center;">0.32mm@148°</div>
<div class="t" style="left:2314px;top:988.1px;font-size:29px;color:#e4e4e4;font-family:'Liberation Sans', sans-serif;transform:scaleX(0.9691);transform-origin:left center;">Cornea C.(Alpha):</div>
<div class="t" style="left:2612px;top:988.1px;font-size:29px;color:#e4e4e4;font-family:'Liberation Sans', sans-serif;transform:scaleX(1.0194);transform-origin:left center;">483μm</div>
<div class="t" style="left:2729.6px;top:988.1px;font-size:29px;color:#e4e4e4;font-family:'Liberation Sans', sans-serif;transform:scaleX(1.0217);transform-origin:left center;">0.09mm@186°</div>
<div class="t" style="left:2669px;top:1035.0px;font-size:25px;color:#e4e4e4;font-family:'Liberation Sans', sans-serif;transform:scaleX(0.9354);transform-origin:left center;">Grade: 1</div>
<div class="t" style="left:2309.6px;top:1093.5px;font-size:29px;color:#e4e4e4;font-family:'Liberation Sans', sans-serif;transform:scaleX(0.9799);transform-origin:left center;">Cornea Vol.:</div>
<div class="t" style="left:2618px;top:1093.5px;font-size:29px;color:#e6e6e6;font-family:'Liberation Sans', sans-serif;transform:scaleX(1.0341);transform-origin:left center;">53.25mm³</div>
<div class="t" style="left:2309.6px;top:1140.6px;font-size:29px;color:#e4e4e4;font-family:'Liberation Sans', sans-serif;transform:scaleX(0.9287);transform-origin:left center;">Cornea Dia.:</div>
<div class="t" style="left:2618px;top:1140.6px;font-size:29px;color:#e6e6e6;font-family:'Liberation Sans', sans-serif;transform:scaleX(1.0137);transform-origin:left center;">12.2mm</div>
<div class="t" style="left:2309.6px;top:1189.1px;font-size:29px;color:#e4e4e4;font-family:'Liberation Sans', sans-serif;transform:scaleX(0.9854);transform-origin:left center;">Pupil Photopic Dia.:</div>
<div class="t" style="left:2618px;top:1189.1px;font-size:29px;color:#e6e6e6;font-family:'Liberation Sans', sans-serif;transform:scaleX(1.0118);transform-origin:left center;">4.42mm</div>
<div class="t" style="left:2309.6px;top:1235.7px;font-size:29px;color:#e4e4e4;font-family:'Liberation Sans', sans-serif;transform:scaleX(0.9794);transform-origin:left center;">Pupil Scotopic Dia.:</div>
<div class="t" style="left:2618px;top:1235.7px;font-size:29px;color:#e6e6e6;font-family:'Liberation Sans', sans-serif;transform:scaleX(1.0118);transform-origin:left center;">6.04mm</div>
<div class="t" style="left:2309.6px;top:1282.1px;font-size:29px;color:#e4e4e4;font-family:'Liberation Sans', sans-serif;transform:scaleX(0.9926);transform-origin:left center;">Chamber Vol.:</div>
<div class="t" style="left:2618px;top:1282.1px;font-size:29px;color:#e6e6e6;font-family:'Liberation Sans', sans-serif;transform:scaleX(1.0322);transform-origin:left center;">144.34mm³</div>
<div class="t" style="left:2309.6px;top:1329.1px;font-size:29px;color:#e4e4e4;font-family:'Liberation Sans', sans-serif;transform:scaleX(1.0117);transform-origin:left center;">Chamber Angle:</div>
<div class="t" style="left:2618px;top:1329.1px;font-size:29px;color:#e6e6e6;font-family:'Liberation Sans', sans-serif;transform:scaleX(0.9576);transform-origin:left center;">37°</div>
<div class="t" style="left:2309.6px;top:1377.6px;font-size:29px;color:#e4e4e4;font-family:'Liberation Sans', sans-serif;transform:scaleX(0.9828);transform-origin:left center;">A.C.Depth(Int.):</div>
<div class="t" style="left:2618px;top:1377.6px;font-size:29px;color:#e6e6e6;font-family:'Liberation Sans', sans-serif;transform:scaleX(1.0118);transform-origin:left center;">2.59mm</div>
<div class="t" style="left:2309.6px;top:1427.1px;font-size:29px;color:#e4e4e4;font-family:'Liberation Sans', sans-serif;transform:scaleX(0.8746);transform-origin:left center;">KCP:</div>
<div class="t" style="left:2618px;top:1427.1px;font-size:29px;color:#3a9e44;font-family:'Liberation Sans', sans-serif;transform:scaleX(0.9692);transform-origin:left center;">17.0%</div>
<div class="t" style="left:2309.6px;top:1479.1px;font-size:29px;color:#e4e4e4;font-family:'Liberation Sans', sans-serif;transform:scaleX(1.0055);transform-origin:left center;"><span style="font-size:15px;vertical-align:2px">&#9651;</span>IOP:</div>
<div class="t" style="left:2618px;top:1479.1px;font-size:29px;color:#e6e6e6;font-family:'Liberation Sans', sans-serif;transform:scaleX(1.0224);transform-origin:left center;">2.68mmHg</div>
<div class="t" style="left:2870px;top:1479.1px;font-size:29px;color:#e4e4e4;font-family:'Liberation Sans', sans-serif;transform:scaleX(0.9506);transform-origin:left center;">IOP</div>
<div class="t" style="left:569px;top:780.0px;font-size:25px;color:#e4e4e4;font-family:'Liberation Sans', sans-serif;transform:scaleX(1.0367);transform-origin:left center;">(WFA)Total Cornea Astig (4mm)</div>
<div class="t" style="left:1035.7px;top:763.8px;font-size:25px;color:#e4e4e4;font-family:'Liberation Sans', sans-serif;transform:scaleX(1.0282);transform-origin:left center;">(WFA)Total Cornea Sphere</div>
<div class="t" style="left:1053px;top:795.6px;font-size:25px;color:#e4e4e4;font-family:'Liberation Sans', sans-serif;transform:scaleX(1.0547);transform-origin:left center;">Aberration - Z40 (6mm)</div>
<div class="t" style="left:1435.5px;top:765.3px;font-size:25px;color:#e4e4e4;font-family:'Liberation Sans', sans-serif;transform:scaleX(1.0440);transform-origin:left center;">(WFA)Total Cornea Irregular Astig</div>
<div class="t" style="left:1594px;top:795.0px;font-size:25px;color:#e4e4e4;font-family:'Liberation Sans', sans-serif;transform:scaleX(1.0344);transform-origin:left center;">(4mm)</div>
<div class="t" style="left:888px;top:917.6px;font-size:30px;color:#f0f0f0;font-family:'Liberation Sans', sans-serif;transform:scaleX(1.0000);transform-origin:left center;">OD</div>
<div class="t" style="left:1326px;top:917.6px;font-size:30px;color:#f0f0f0;font-family:'Liberation Sans', sans-serif;transform:scaleX(1.0378);transform-origin:left center;">OD</div>
<div class="t" style="left:1766.6px;top:917.6px;font-size:30px;color:#f0f0f0;font-family:'Liberation Sans', sans-serif;transform:scaleX(1.0200);transform-origin:left center;">OD</div>
<div class="t" style="left:556.8px;top:929.8px;font-size:17px;color:#d8d8d8;font-family:'Liberation Sans', sans-serif;transform:scaleX(1.2228);transform-origin:left center;">4mm</div>
<div class="t" style="left:994.8px;top:929.8px;font-size:17px;color:#d8d8d8;font-family:'Liberation Sans', sans-serif;transform:scaleX(1.1805);transform-origin:left center;">6mm</div>
<div class="t" style="left:1435.5px;top:929.8px;font-size:17px;color:#d8d8d8;font-family:'Liberation Sans', sans-serif;transform:scaleX(1.1884);transform-origin:left center;">4mm</div>
<div class="t" style="left:564.6px;top:1302.9px;font-size:21px;color:#d8d8d8;font-family:'Liberation Sans', sans-serif;transform:translateX(-50%);transform-origin:center center;">6</div>
<div class="t" style="left:596.1px;top:1302.9px;font-size:21px;color:#d8d8d8;font-family:'Liberation Sans', sans-serif;transform:translateX(-50%);transform-origin:center center;">5</div>
<div class="t" style="left:627.6px;top:1302.9px;font-size:21px;color:#d8d8d8;font-family:'Liberation Sans', sans-serif;transform:translateX(-50%);transform-origin:center center;">4</div>
<div class="t" style="left:659.1px;top:1302.9px;font-size:21px;color:#d8d8d8;font-family:'Liberation Sans', sans-serif;transform:translateX(-50%);transform-origin:center center;">3</div>
<div class="t" style="left:690.6px;top:1302.9px;font-size:21px;color:#d8d8d8;font-family:'Liberation Sans', sans-serif;transform:translateX(-50%);transform-origin:center center;">2</div>
<div class="t" style="left:722.0px;top:1302.9px;font-size:21px;color:#d8d8d8;font-family:'Liberation Sans', sans-serif;transform:translateX(-50%);transform-origin:center center;">1</div>
<div class="t" style="left:753.5px;top:1302.9px;font-size:21px;color:#d8d8d8;font-family:'Liberation Sans', sans-serif;transform:translateX(-50%);transform-origin:center center;">0</div>
<div class="t" style="left:785.0px;top:1302.9px;font-size:21px;color:#d8d8d8;font-family:'Liberation Sans', sans-serif;transform:translateX(-50%);transform-origin:center center;">1</div>
<div class="t" style="left:816.5px;top:1302.9px;font-size:21px;color:#d8d8d8;font-family:'Liberation Sans', sans-serif;transform:translateX(-50%);transform-origin:center center;">2</div>
<div class="t" style="left:848.0px;top:1302.9px;font-size:21px;color:#d8d8d8;font-family:'Liberation Sans', sans-serif;transform:translateX(-50%);transform-origin:center center;">3</div>
<div class="t" style="left:879.5px;top:1302.9px;font-size:21px;color:#d8d8d8;font-family:'Liberation Sans', sans-serif;transform:translateX(-50%);transform-origin:center center;">4</div>
<div class="t" style="left:911.0px;top:1302.9px;font-size:21px;color:#d8d8d8;font-family:'Liberation Sans', sans-serif;transform:translateX(-50%);transform-origin:center center;">5</div>
<div class="t" style="left:942.5px;top:1302.9px;font-size:21px;color:#d8d8d8;font-family:'Liberation Sans', sans-serif;transform:translateX(-50%);transform-origin:center center;">6</div>
<div class="t" style="left:1002.6px;top:1302.9px;font-size:21px;color:#d8d8d8;font-family:'Liberation Sans', sans-serif;transform:translateX(-50%);transform-origin:center center;">6</div>
<div class="t" style="left:1034.2px;top:1302.9px;font-size:21px;color:#d8d8d8;font-family:'Liberation Sans', sans-serif;transform:translateX(-50%);transform-origin:center center;">5</div>
<div class="t" style="left:1065.9px;top:1302.9px;font-size:21px;color:#d8d8d8;font-family:'Liberation Sans', sans-serif;transform:translateX(-50%);transform-origin:center center;">4</div>
<div class="t" style="left:1097.5px;top:1302.9px;font-size:21px;color:#d8d8d8;font-family:'Liberation Sans', sans-serif;transform:translateX(-50%);transform-origin:center center;">3</div>
<div class="t" style="left:1129.2px;top:1302.9px;font-size:21px;color:#d8d8d8;font-family:'Liberation Sans', sans-serif;transform:translateX(-50%);transform-origin:center center;">2</div>
<div class="t" style="left:1160.8px;top:1302.9px;font-size:21px;color:#d8d8d8;font-family:'Liberation Sans', sans-serif;transform:translateX(-50%);transform-origin:center center;">1</div>
<div class="t" style="left:1192.5px;top:1302.9px;font-size:21px;color:#d8d8d8;font-family:'Liberation Sans', sans-serif;transform:translateX(-50%);transform-origin:center center;">0</div>
<div class="t" style="left:1224.2px;top:1302.9px;font-size:21px;color:#d8d8d8;font-family:'Liberation Sans', sans-serif;transform:translateX(-50%);transform-origin:center center;">1</div>
<div class="t" style="left:1255.8px;top:1302.9px;font-size:21px;color:#d8d8d8;font-family:'Liberation Sans', sans-serif;transform:translateX(-50%);transform-origin:center center;">2</div>
<div class="t" style="left:1287.5px;top:1302.9px;font-size:21px;color:#d8d8d8;font-family:'Liberation Sans', sans-serif;transform:translateX(-50%);transform-origin:center center;">3</div>
<div class="t" style="left:1319.1px;top:1302.9px;font-size:21px;color:#d8d8d8;font-family:'Liberation Sans', sans-serif;transform:translateX(-50%);transform-origin:center center;">4</div>
<div class="t" style="left:1350.8px;top:1302.9px;font-size:21px;color:#d8d8d8;font-family:'Liberation Sans', sans-serif;transform:translateX(-50%);transform-origin:center center;">5</div>
<div class="t" style="left:1382.4px;top:1302.9px;font-size:21px;color:#d8d8d8;font-family:'Liberation Sans', sans-serif;transform:translateX(-50%);transform-origin:center center;">6</div>
<div class="t" style="left:1443.5px;top:1302.9px;font-size:21px;color:#d8d8d8;font-family:'Liberation Sans', sans-serif;transform:translateX(-50%);transform-origin:center center;">6</div>
<div class="t" style="left:1475.0px;top:1302.9px;font-size:21px;color:#d8d8d8;font-family:'Liberation Sans', sans-serif;transform:translateX(-50%);transform-origin:center center;">5</div>
<div class="t" style="left:1506.4px;top:1302.9px;font-size:21px;color:#d8d8d8;font-family:'Liberation Sans', sans-serif;transform:translateX(-50%);transform-origin:center center;">4</div>
<div class="t" style="left:1537.9px;top:1302.9px;font-size:21px;color:#d8d8d8;font-family:'Liberation Sans', sans-serif;transform:translateX(-50%);transform-origin:center center;">3</div>
<div class="t" style="left:1569.3px;top:1302.9px;font-size:21px;color:#d8d8d8;font-family:'Liberation Sans', sans-serif;transform:translateX(-50%);transform-origin:center center;">2</div>
<div class="t" style="left:1600.8px;top:1302.9px;font-size:21px;color:#d8d8d8;font-family:'Liberation Sans', sans-serif;transform:translateX(-50%);transform-origin:center center;">1</div>
<div class="t" style="left:1632.3px;top:1302.9px;font-size:21px;color:#d8d8d8;font-family:'Liberation Sans', sans-serif;transform:translateX(-50%);transform-origin:center center;">0</div>
<div class="t" style="left:1663.7px;top:1302.9px;font-size:21px;color:#d8d8d8;font-family:'Liberation Sans', sans-serif;transform:translateX(-50%);transform-origin:center center;">1</div>
<div class="t" style="left:1695.2px;top:1302.9px;font-size:21px;color:#d8d8d8;font-family:'Liberation Sans', sans-serif;transform:translateX(-50%);transform-origin:center center;">2</div>
<div class="t" style="left:1726.6px;top:1302.9px;font-size:21px;color:#d8d8d8;font-family:'Liberation Sans', sans-serif;transform:translateX(-50%);transform-origin:center center;">3</div>
<div class="t" style="left:1758.1px;top:1302.9px;font-size:21px;color:#d8d8d8;font-family:'Liberation Sans', sans-serif;transform:translateX(-50%);transform-origin:center center;">4</div>
<div class="t" style="left:1789.6px;top:1302.9px;font-size:21px;color:#d8d8d8;font-family:'Liberation Sans', sans-serif;transform:translateX(-50%);transform-origin:center center;">5</div>
<div class="t" style="left:1821.0px;top:1302.9px;font-size:21px;color:#d8d8d8;font-family:'Liberation Sans', sans-serif;transform:translateX(-50%);transform-origin:center center;">6</div>
<div class="t" style="left:1885px;top:1026.0px;font-size:24px;color:#d8d8d8;font-family:'Liberation Sans', sans-serif;transform:translateX(-50%);transform-origin:center center;transform:translateX(-50%) rotate(90deg);transform-origin:center center;">Prescription</div>
<div class="t" style="left:1923px;top:763.5px;font-size:21px;color:#f0f0f0;font-family:'Liberation Sans', sans-serif;font-weight:bold;transform:scaleX(1.0442);transform-origin:left center;">Toric</div>
<div class="t" style="left:1922.7px;top:960.9px;font-size:21px;color:#f0f0f0;font-family:'Liberation Sans', sans-serif;font-weight:bold;transform:scaleX(1.0003);transform-origin:left center;">Aspheric</div>
<div class="t" style="left:1922.7px;top:1155.9px;font-size:21px;color:#f0f0f0;font-family:'Liberation Sans', sans-serif;font-weight:bold;transform:scaleX(1.0378);transform-origin:left center;">Multifocal</div>
<div class="t" style="left:2107px;top:808.0px;font-size:25px;color:#cccccc;font-family:'Liberation Sans', sans-serif;transform:scaleX(1.0384);transform-origin:left center;">Not</div>
<div class="t" style="left:2107px;top:837.0px;font-size:25px;color:#cccccc;font-family:'Liberation Sans', sans-serif;transform:scaleX(1.0224);transform-origin:left center;">recommended</div>
<div class="t" style="left:2107px;top:1002.8px;font-size:25px;color:#cccccc;font-family:'Liberation Sans', sans-serif;transform:scaleX(0.9658);transform-origin:left center;">0 Spherical</div>
<div class="t" style="left:2107px;top:1032.6px;font-size:25px;color:#cccccc;font-family:'Liberation Sans', sans-serif;transform:scaleX(1.0385);transform-origin:left center;">Aberration</div>
<div class="t" style="left:2107px;top:1219.4px;font-size:25px;color:#cccccc;font-family:'Liberation Sans', sans-serif;transform:scaleX(0.9608);transform-origin:left center;">Cautious</div>
<div class="t" style="left:668.5px;top:1369.0px;font-size:25px;color:#d8c848;font-family:'Liberation Sans', sans-serif;transform:scaleX(1.0191);transform-origin:left center;">0.59 D @ 86 °</div>
<div class="t" style="left:562px;top:1450.6px;font-size:25px;color:#f0f0f0;font-family:'Liberation Sans', sans-serif;transform:scaleX(1.0738);transform-origin:left center;">Age optimization of astigmatism</div>
<div class="t" style="left:1143.7px;top:1371.0px;font-size:25px;color:#88cc88;font-family:'Liberation Sans', sans-serif;transform:scaleX(0.9995);transform-origin:left center;">0.16 μm</div>
<div class="t" style="left:1019.6px;top:1435.5px;font-size:25px;color:#f0f0f0;font-family:'Liberation Sans', sans-serif;transform:scaleX(1.0606);transform-origin:left center;">Age optimization of spherical</div>
<div class="t" style="left:1129.7px;top:1467.0px;font-size:25px;color:#f0f0f0;font-family:'Liberation Sans', sans-serif;transform:scaleX(1.0713);transform-origin:left center;">aberration</div>
<div class="t" style="left:1456px;top:1416.0px;font-size:25px;color:#e4e4e4;font-family:'Liberation Sans', sans-serif;transform:scaleX(1.0608);transform-origin:left center;">RMS:</div>
<div class="t" style="left:1648px;top:1416.0px;font-size:25px;color:#88cc88;font-family:'Liberation Sans', sans-serif;transform:scaleX(1.1734);transform-origin:left center;">0.18 μm</div>
<div class="t" style="left:1877px;top:1364.6px;font-size:27px;color:#e4e4e4;font-family:'Liberation Sans', sans-serif;transform:scaleX(1.0734);transform-origin:left center;">Rb / Rf (3mm):</div>
<div class="t" style="left:2135.5px;top:1364.6px;font-size:27px;color:#e4e4e4;font-family:'Liberation Sans', sans-serif;transform:scaleX(1.0679);transform-origin:left center;">86.40%</div>
<div class="t" style="left:1924px;top:1415.0px;font-size:27px;color:#e4e4e4;font-family:'Liberation Sans', sans-serif;transform:scaleX(1.0400);transform-origin:left center;">Kappa:</div>
<div class="t" style="left:2132px;top:1415.0px;font-size:27px;color:#e4e4e4;font-family:'Liberation Sans', sans-serif;transform:scaleX(1.0928);transform-origin:left center;">0.32mm</div>
<div class="t" style="left:1927.6px;top:1464.0px;font-size:27px;color:#e4e4e4;font-family:'Liberation Sans', sans-serif;transform:scaleX(1.1180);transform-origin:left center;">Alpha:</div>
<div class="t" style="left:2132px;top:1464.0px;font-size:27px;color:#e4e4e4;font-family:'Liberation Sans', sans-serif;transform:scaleX(1.0928);transform-origin:left center;">0.09mm</div>
<div class="t" style="left:1539px;top:194.9px;font-size:21px;color:#d8d8d8;font-family:'Liberation Sans', sans-serif;transform:translateX(-50%);transform-origin:center center;">4</div>
<div class="t" style="left:1539px;top:304.9px;font-size:21px;color:#d8d8d8;font-family:'Liberation Sans', sans-serif;transform:translateX(-50%);transform-origin:center center;">2</div>
<div class="t" style="left:1539px;top:413.9px;font-size:21px;color:#d8d8d8;font-family:'Liberation Sans', sans-serif;transform:translateX(-50%);transform-origin:center center;">0</div>
<div class="t" style="left:1539px;top:525.4px;font-size:21px;color:#d8d8d8;font-family:'Liberation Sans', sans-serif;transform:translateX(-50%);transform-origin:center center;">2</div>
<div class="t" style="left:1539px;top:633.9px;font-size:21px;color:#d8d8d8;font-family:'Liberation Sans', sans-serif;transform:translateX(-50%);transform-origin:center center;">4</div>
<div class="t" style="left:1609px;top:706.9px;font-size:21px;color:#d8d8d8;font-family:'Liberation Sans', sans-serif;transform:translateX(-50%);transform-origin:center center;">4</div>
<div class="t" style="left:1717px;top:706.9px;font-size:21px;color:#d8d8d8;font-family:'Liberation Sans', sans-serif;transform:translateX(-50%);transform-origin:center center;">2</div>
<div class="t" style="left:1828.5px;top:706.9px;font-size:21px;color:#d8d8d8;font-family:'Liberation Sans', sans-serif;transform:translateX(-50%);transform-origin:center center;">0</div>
<div class="t" style="left:1938px;top:706.9px;font-size:21px;color:#d8d8d8;font-family:'Liberation Sans', sans-serif;transform:translateX(-50%);transform-origin:center center;">2</div>
<div class="t" style="left:2047px;top:706.9px;font-size:21px;color:#d8d8d8;font-family:'Liberation Sans', sans-serif;transform:translateX(-50%);transform-origin:center center;">4</div>
<div class="a" style="left:0;top:0;width:60px;height:1502px;background:#fff"></div>
<div class="a" style="left:2940px;top:0;width:60px;height:1502px;background:#fff"></div>
</body></html>
